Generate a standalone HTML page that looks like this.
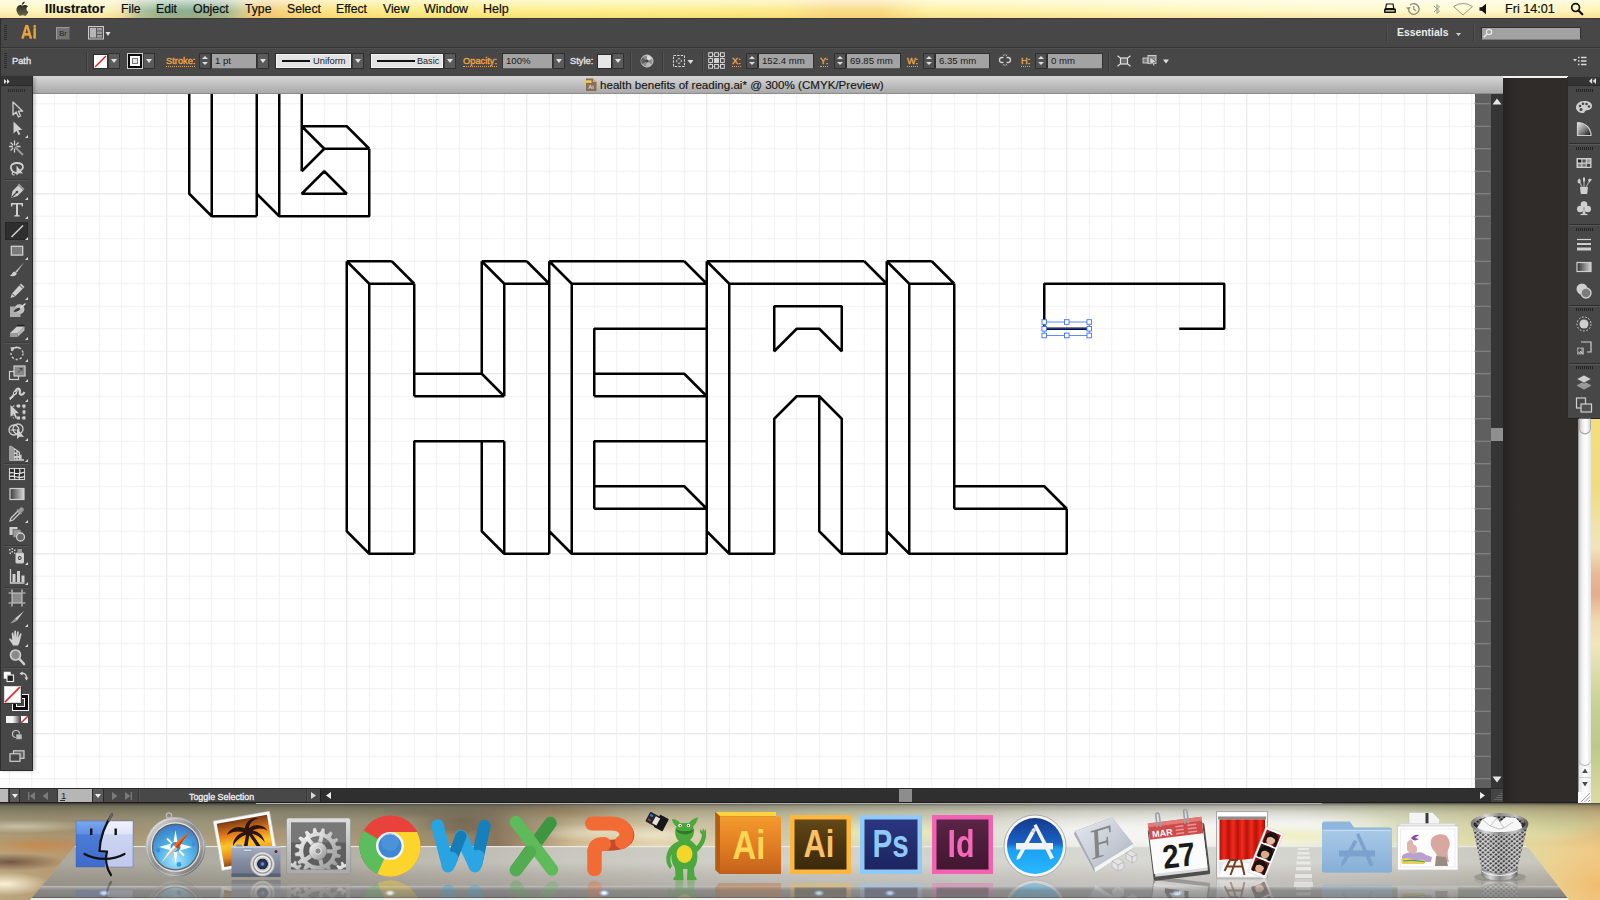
<!DOCTYPE html>
<html><head><meta charset="utf-8"><title>Illustrator</title>
<style>
*{box-sizing:border-box;margin:0;padding:0}
html,body{width:1600px;height:900px;overflow:hidden;background:#d8cfa6;font-family:"Liberation Sans",sans-serif}
.abs{position:absolute}
#root{position:absolute;left:0;top:0;width:1600px;height:900px;overflow:hidden}
svg{position:absolute;overflow:visible}
.t{position:absolute;white-space:nowrap;line-height:1}
</style></head><body><div id="root">
<!-- wallpaper bottom strip -->
<div class="abs" id="wall" style="left:0;top:803px;width:1600px;height:97px;background:linear-gradient(90deg,#c9b58d 0%,#b89468 6%,#c8b690 14%,#b5a88a 22%,#a79c82 32%,#b9b096 45%,#c8c3ad 55%,#cfcfc4 66%,#d5d6cc 78%,#d9dbb8 88%,#e6d9a0 94%,#f0cf8a 100%)"></div>
<!-- right wallpaper strip -->
<div class="abs" style="left:1577px;top:419px;width:23px;height:390px;background:linear-gradient(180deg,#f2de7a 0%,#f0dc80 18%,#efe3a8 27%,#f0e4b8 33%,#e8b894 40%,#e4ae8c 45%,#efdcae 52%,#f0e6bc 58%,#d8dca6 66%,#c6d094 74%,#bcc888 84%,#cfd49a 92%,#dedca4 100%)"></div>
<!-- menubar -->
<div class="abs" id="menubar" style="left:0;top:0;width:1600px;height:18px;background:linear-gradient(180deg,rgba(255,255,255,.6) 0%,rgba(255,255,255,.2) 40%,rgba(255,255,255,0) 60%,rgba(236,160,60,.22) 100%),linear-gradient(90deg,#fdf6c0 0%,#fdf4b6 6.5%,#f2e8b0 7.6%,#b4c7a2 8.6%,#8fb498 10%,#88ae94 12%,#9ab898 14%,#c8cc98 15%,#efce84 15.8%,#f4cf7c 17%,#f9e184 19%,#fcec88 24%,#fdf08c 40%,#fcea8a 49%,#f9dc88 52%,#f9dc88 55%,#fdf2a2 58%,#fef6b6 70%,#fef9c8 82%,#fefad0 92%,#fdf3b0 100%)"></div>
<!-- app bar + control bar -->
<div class="abs" style="left:0;top:18px;width:1600px;height:59px;background:#474747"></div>
<div class="abs" style="left:0;top:18px;width:1600px;height:1px;background:#3a3a3a"></div>
<div class="abs" style="left:0;top:47px;width:1600px;height:1px;background:#353535"></div>
<div class="abs" style="left:0;top:48px;width:1600px;height:1px;background:#505050"></div>
<!-- dark dock area right of doc -->
<div class="abs" style="left:1503px;top:77px;width:75px;height:726px;background:linear-gradient(90deg,#262423 0%,#2f2c2a 20%,#2f2c2a 100%)"></div>
<div class="abs" style="left:1503px;top:76px;width:65px;height:2px;background:#f2f2f2"></div>
<!-- doc tab bar -->
<div class="abs" style="left:33px;top:76px;width:1470px;height:18px;background:linear-gradient(180deg,#d6d6d6 0%,#c6c6c6 35%,#b0b0b0 80%,#a6a6a6 100%)"></div>
<div class="abs" style="left:33px;top:93px;width:1470px;height:1px;background:#8c8c8c"></div>
<!-- canvas white -->
<div class="abs" id="canvas" style="left:0;top:94px;width:1475px;height:694px;background:#fff"></div>
<!-- gray strip right of canvas -->
<div class="abs" style="left:1474.5px;top:94px;width:16px;height:694px;background:#5f5f5f"></div>
<!-- v scrollbar -->
<div class="abs" style="left:1490.5px;top:94px;width:12.5px;height:694px;background:#353535"></div>
<div class="abs" style="left:1490.5px;top:428px;width:12.5px;height:13px;background:#8f8f8f"></div>
<!-- status bar -->
<div class="abs" style="left:0;top:788px;width:1503px;height:15px;background:#2f2f2f"></div>
<div class="abs" style="left:0;top:788px;width:321px;height:15px;background:#484848"></div>
<div class="abs" style="left:0;top:788px;width:1503px;height:1px;background:#2a2a2a"></div>
<!-- canvas artwork -->
<svg width="1600" height="900" style="left:0;top:0" viewBox="0 0 1600 900">
<defs><clipPath id="cv"><rect x="0" y="94" width="1475" height="694"/></clipPath></defs>
<path d="M9.25 94V788M31.75 94V788M54.25 94V788M76.75 94V788M99.25 94V788M121.75 94V788M144.25 94V788M166.75 94V788M189.25 94V788M211.75 94V788M234.25 94V788M256.75 94V788M279.25 94V788M301.75 94V788M324.25 94V788M346.75 94V788M369.25 94V788M391.75 94V788M414.25 94V788M436.75 94V788M459.25 94V788M481.75 94V788M504.25 94V788M526.75 94V788M549.25 94V788M571.75 94V788M594.25 94V788M616.75 94V788M639.25 94V788M661.75 94V788M684.25 94V788M706.75 94V788M729.25 94V788M751.75 94V788M774.25 94V788M796.75 94V788M819.25 94V788M841.75 94V788M864.25 94V788M886.75 94V788M909.25 94V788M931.75 94V788M954.25 94V788M976.75 94V788M999.25 94V788M1021.75 94V788M1044.25 94V788M1066.75 94V788M1089.25 94V788M1111.75 94V788M1134.25 94V788M1156.75 94V788M1179.25 94V788M1201.75 94V788M1224.25 94V788M1246.75 94V788M1269.25 94V788M1291.75 94V788M1314.25 94V788M1336.75 94V788M1359.25 94V788M1381.75 94V788M1404.25 94V788M1426.75 94V788M1449.25 94V788M1471.75 94V788M0 103.75H1475M0 126.25H1475M0 148.75H1475M0 171.25H1475M0 193.75H1475M0 216.25H1475M0 238.75H1475M0 261.25H1475M0 283.75H1475M0 306.25H1475M0 328.75H1475M0 351.25H1475M0 373.75H1475M0 396.25H1475M0 418.75H1475M0 441.25H1475M0 463.75H1475M0 486.25H1475M0 508.75H1475M0 531.25H1475M0 553.75H1475M0 576.25H1475M0 598.75H1475M0 621.25H1475M0 643.75H1475M0 666.25H1475M0 688.75H1475M0 711.25H1475M0 733.75H1475M0 756.25H1475M0 778.75H1475" stroke="#f1f1f1" stroke-width="1" fill="none"/>
<path d="M1474.5 103.75H1490.5M1474.5 126.25H1490.5M1474.5 148.75H1490.5M1474.5 171.25H1490.5M1474.5 193.75H1490.5M1474.5 216.25H1490.5M1474.5 238.75H1490.5M1474.5 261.25H1490.5M1474.5 283.75H1490.5M1474.5 306.25H1490.5M1474.5 328.75H1490.5M1474.5 351.25H1490.5M1474.5 373.75H1490.5M1474.5 396.25H1490.5M1474.5 418.75H1490.5M1474.5 441.25H1490.5M1474.5 463.75H1490.5M1474.5 486.25H1490.5M1474.5 508.75H1490.5M1474.5 531.25H1490.5M1474.5 553.75H1490.5M1474.5 576.25H1490.5M1474.5 598.75H1490.5M1474.5 621.25H1490.5M1474.5 643.75H1490.5M1474.5 666.25H1490.5M1474.5 688.75H1490.5M1474.5 711.25H1490.5M1474.5 733.75H1490.5M1474.5 756.25H1490.5M1474.5 778.75H1490.5" stroke="#8b8b8b" stroke-width="1" fill="none"/>
<path d="M166.75 94V788M346.75 94V788M526.75 94V788M706.75 94V788M886.75 94V788M1066.75 94V788M1246.75 94V788M1426.75 94V788M0 193.75H1474.5M0 373.75H1474.5M0 553.75H1474.5M0 733.75H1474.5" stroke="#e9e9e9" stroke-width="1" fill="none"/>
<g clip-path="url(#cv)">
<path d="M346.75 261.25L391.75 261.25M346.75 261.25L369.25 283.75M391.75 261.25L414.25 283.75M369.25 283.75L414.25 283.75M346.75 261.25L346.75 531.25L369.25 553.75M369.25 283.75L369.25 553.75L414.25 553.75M414.25 283.75L414.25 396.25M414.25 373.75L481.75 373.75M414.25 396.25L504.25 396.25M481.75 373.75L504.25 396.25M481.75 261.25L481.75 373.75M504.25 283.75L504.25 396.25M481.75 261.25L526.75 261.25M481.75 261.25L504.25 283.75M526.75 261.25L549.25 283.75M504.25 283.75L549.25 283.75M414.25 553.75L414.25 441.25L504.25 441.25M481.75 441.25L481.75 531.25L504.25 553.75M504.25 441.25L504.25 553.75L549.25 553.75M549.25 261.25L549.25 553.75M549.25 261.25L684.25 261.25M549.25 261.25L571.75 283.75M684.25 261.25L706.75 283.75M571.75 283.75L706.75 283.75M549.25 531.25L571.75 553.75M571.75 283.75L571.75 553.75L706.75 553.75M706.75 261.25L706.75 553.75M706.75 328.75L594.25 328.75L594.25 396.25M594.25 373.75L684.25 373.75L706.75 396.25M594.25 396.25L706.75 396.25M706.75 441.25L594.25 441.25L594.25 508.75M594.25 486.25L684.25 486.25L706.75 508.75M594.25 508.75L706.75 508.75M706.75 261.25L864.25 261.25M706.75 261.25L729.25 283.75M864.25 261.25L886.75 283.75M729.25 283.75L886.75 283.75M706.75 531.25L729.25 553.75M729.25 283.75L729.25 553.75L774.25 553.75L774.25 418.75L796.75 396.25L819.25 396.25L841.75 418.75L841.75 553.75L886.75 553.75M819.25 396.25L819.25 531.25L841.75 553.75M886.75 261.25L886.75 553.75M774.25 306.25L841.75 306.25L841.75 351.25L819.25 328.75L796.75 328.75L774.25 351.25ZM886.75 261.25L931.75 261.25M886.75 261.25L909.25 283.75M931.75 261.25L954.25 283.75M909.25 283.75L954.25 283.75M886.75 531.25L909.25 553.75M909.25 283.75L909.25 553.75L1066.75 553.75L1066.75 508.75M954.25 283.75L954.25 508.75M954.25 486.25L1044.25 486.25L1066.75 508.75M954.25 508.75L1066.75 508.75M1044.25 328.75L1044.25 283.75L1224.25 283.75L1224.25 328.75L1179.25 328.75M189.25 81.25L189.25 193.75L211.75 216.25M211.75 81.25L211.75 216.25L256.75 216.25M256.75 81.25L256.75 216.25M256.75 193.75L279.25 216.25M279.25 81.25L279.25 216.25L369.25 216.25L369.25 148.75M301.75 81.25L301.75 171.25M301.75 126.25L346.75 126.25L369.25 148.75M324.25 148.75L369.25 148.75M301.75 126.25L324.25 148.75L301.75 171.25M301.75 193.75L324.25 171.25L346.75 193.75Z" stroke="#000" stroke-width="2.5" fill="none" stroke-linejoin="bevel" stroke-linecap="butt"/>
<path d="M1044.25 328.75H1089.25" stroke="#000" stroke-width="2.5"/>
<path d="M1044.25 328.75H1089.25" stroke="#2b50d8" stroke-width="0.9"/>
<rect x="1044.25" y="322" width="45" height="13.5" fill="none" stroke="#4d7dff" stroke-width="0.9"/>
<g fill="#fff" stroke="#3f6ffa" stroke-width="0.9"><rect x="1041.95" y="319.7" width="4.6" height="4.6"/><rect x="1041.95" y="326.45" width="4.6" height="4.6"/><rect x="1041.95" y="333.2" width="4.6" height="4.6"/><rect x="1064.45" y="319.7" width="4.6" height="4.6"/><rect x="1064.45" y="333.2" width="4.6" height="4.6"/><rect x="1086.95" y="319.7" width="4.6" height="4.6"/><rect x="1086.95" y="326.45" width="4.6" height="4.6"/><rect x="1086.95" y="333.2" width="4.6" height="4.6"/></g>
</g></svg>
<!-- menubar content -->
<style>
.mi{position:absolute;top:0;height:18px;line-height:19px;font-size:12.2px;color:#0c0c0c;-webkit-text-stroke:.2px #111;white-space:nowrap}
</style>
<svg width="16" height="16" style="left:14px;top:1px" viewBox="0 0 16 16"><defs><linearGradient id="apg" x1="0" y1="0" x2="0" y2="1"><stop offset="0" stop-color="#1a1a1a"/><stop offset="1" stop-color="#6a6550"/></linearGradient></defs><path d="M8.3 4.6C9.3 4.6 10 3.9 11.3 3.9c1.1 0 2.1.5 2.7 1.5-2.3 1.3-1.9 4.5.5 5.4-.4 1-1 2-1.6 2.7-.6.7-1.2 1.3-2 1.3-.9 0-1.2-.5-2.3-.5-1.1 0-1.400.5-2.300.5-.8 0-1.400-.7-2-1.400C2.800 11.600 1.700 8.300 3.200 6c.7-1.200 1.900-2 3-2 1 0 1.600.6 2.100.6zM10.600 0.500c.1 1.600-1.200 3.200-2.800 3.300C7.600 2.300 9.100.7 10.600.5z" fill="url(#apg)"/></svg>
<div class="mi" style="left:45px;font-weight:bold;font-size:12.6px;letter-spacing:.15px">Illustrator</div>
<div class="mi" style="left:121px">File</div>
<div class="mi" style="left:156px">Edit</div>
<div class="mi" style="left:193px;font-size:12.4px">Object</div>
<div class="mi" style="left:245px">Type</div>
<div class="mi" style="left:287px">Select</div>
<div class="mi" style="left:336px">Effect</div>
<div class="mi" style="left:383px">View</div>
<div class="mi" style="left:424px;font-size:12.4px">Window</div>
<div class="mi" style="left:483px;font-size:12.5px">Help</div>
<div class="mi" style="left:1505px;font-size:12.6px">Fri 14:01</div>
<!-- printer -->
<svg width="14" height="12" style="left:1383px;top:3px" viewBox="0 0 14 12"><path d="M3.500 1h6.500l.8 4.500H2.700z" fill="none" stroke="#111" stroke-width="1.200"/><rect x="1" y="5.500" width="12" height="4.500" rx="1" fill="#111"/><rect x="2.500" y="7.200" width="9" height="1.300" fill="#f5e9a0"/></svg>
<!-- time machine -->
<svg width="16" height="14" style="left:1405px;top:2px" viewBox="0 0 16 14"><path d="M3.500 7a5.300 5.300 0 1 0 1.600-3.800" fill="none" stroke="#8d8a7c" stroke-width="1.300"/><path d="M1 5.500l2.600 2.800L5.800 5z" fill="#8d8a7c"/><path d="M8.800 4v3.300l2.200 1.500" fill="none" stroke="#8d8a7c" stroke-width="1.200"/></svg>
<!-- bluetooth -->
<svg width="8" height="14" style="left:1433px;top:2px" viewBox="0 0 8 14"><path d="M1 4l5.500 5L4 11.500v-9L6.500 5 1 10" fill="none" stroke="#9a9684" stroke-width="1"/></svg>
<!-- wifi -->
<svg width="22" height="14" style="left:1452px;top:2px" viewBox="0 0 22 14"><path d="M1.500 4.500Q11-1.500 20.500 4.500L11 13z" fill="none" stroke="#9a9684" stroke-width="1"/></svg>
<!-- volume -->
<svg width="9" height="12" style="left:1479px;top:3px" viewBox="0 0 9 12"><path d="M0.500 4.200h2.200L7 .8v10.400L2.700 7.800H.5z" fill="#111"/></svg>
<!-- spotlight -->
<svg width="14" height="14" style="left:1570px;top:2px" viewBox="0 0 14 14"><circle cx="5.600" cy="5.600" r="3.900" fill="none" stroke="#111" stroke-width="1.700"/><path d="M8.500 8.500l3.800 3.800" stroke="#111" stroke-width="2.200" stroke-linecap="round"/></svg>
<!-- app bar -->
<style>
.grip{position:absolute;width:3px;background-image:repeating-linear-gradient(180deg,#2c2c2c 0,#2c2c2c 1px,transparent 1px,transparent 2px)}
.cl{position:absolute;top:48px;height:28px;line-height:27px;font-size:9.3px;color:#eea544;white-space:nowrap;-webkit-text-stroke:.35px #eea544}
.cl u{text-decoration:none;border-bottom:1px dotted #eea544;padding-bottom:0}
.cw{position:absolute;top:48px;height:28px;line-height:26px;font-size:9.3px;color:#e4e4e4;white-space:nowrap;-webkit-text-stroke:.35px #e4e4e4}
.fld{position:absolute;top:53px;height:16px;background:#a3a3a3;border:1px solid #2f2f2f;border-bottom-color:#5a5a5a;font-size:9.6px;line-height:14px;color:#1c1c1c;padding-left:3px;white-space:nowrap;overflow:hidden}
.dd{position:absolute;top:53px;height:16px;width:12px;background:#5b5b5b;border:1px solid #303030;border-left-color:#3a3a3a}
.dd:after{content:"";position:absolute;left:2px;top:5px;border:3.500px solid transparent;border-top:4px solid #e0e0e0;border-bottom:0}
.spin{position:absolute;top:53px;height:16px;width:12px;background:#505050;border:1px solid #303030}
.spin:before{content:"";position:absolute;left:2px;top:1.500px;border:3px solid transparent;border-bottom:3.500px solid #dcdcdc;border-top:0}
.spin:after{content:"";position:absolute;left:2px;top:8px;border:3px solid transparent;border-top:3.500px solid #dcdcdc;border-bottom:0}
.lbox{position:absolute;top:54px;height:14px;background:#e3e3e3;border:1px solid #f4f4f4;box-shadow:0 0 0 1px #2e2e2e;font-size:9.300px;line-height:13px;color:#1c1c1c;white-space:nowrap}
.sep{position:absolute;width:1px;background:#3a3a3a;box-shadow:1px 0 0 #525252}
</style>
<div class="grip" style="left:4px;top:25px;height:16px"></div>
<div class="t" style="left:21px;top:22px;font-size:18.500px;line-height:19px;font-weight:bold;color:#e9a23c;transform:scaleX(.86);transform-origin:0 0;text-shadow:0 1px 0 #c7822a">Ai</div>
<div class="abs" style="left:56px;top:27px;width:14px;height:13px;background:#747474;border:1px solid #9a9a9a;border-right-color:#5a5a5a;border-bottom-color:#5a5a5a;font-size:7.500px;line-height:11px;color:#1e1e1e;text-align:center">Br</div>
<svg width="24" height="14" style="left:88px;top:26px" viewBox="0 0 24 14"><rect x=".5" y=".5" width="15" height="12.500" fill="#5a5a5a" stroke="#c9c9c9"/><rect x="2" y="2" width="6" height="9.500" fill="#b5b5b5"/><rect x="9" y="2" width="5" height="2.500" fill="#9c9c9c"/><rect x="9" y="5.500" width="5" height="2.500" fill="#9c9c9c"/><rect x="9" y="9" width="5" height="2.500" fill="#9c9c9c"/><path d="M17.500 6h5l-2.500 4z" fill="#e2e2e2"/></svg>
<!-- essentials -->
<div class="sep" style="left:1386px;top:25px;height:17px"></div>
<div class="t" style="left:1397px;top:27px;font-size:10.400px;line-height:12px;font-weight:bold;color:#ececec">Essentials</div>
<svg width="5" height="3" style="left:1456px;top:32.500px" viewBox="0 0 5 3"><path d="M0 0h5L2.500 3z" fill="#d5d5d5"/></svg>
<div class="sep" style="left:1473px;top:25px;height:17px"></div>
<div class="abs" style="left:1481px;top:27px;width:100px;height:13px;background:#a2a2a2;border:1px solid #303030;border-bottom-color:#7a7a7a"></div>
<svg width="10" height="10" style="left:1483px;top:28px" viewBox="0 0 10 10"><circle cx="6" cy="4" r="2.600" fill="none" stroke="#e9e9e9" stroke-width="1.300"/><path d="M4 6L.8 9.200" stroke="#e9e9e9" stroke-width="1.500"/></svg>
<!-- control bar -->
<div class="grip" style="left:4px;top:53px;height:16px"></div>
<div class="cw" style="left:12px">Path</div>
<div class="sep" style="left:86px;top:52px;height:20px"></div>
<!-- fill swatch -->
<div class="abs" style="left:93px;top:54px;width:15px;height:15px;background:#fff;border:1px solid #2c2c2c"></div>
<svg width="13" height="13" style="left:94px;top:55px" viewBox="0 0 13 13"><path d="M1 12L12 1" stroke="#e8201c" stroke-width="1.500"/></svg>
<div class="dd" style="left:108px"></div>
<!-- stroke swatch -->
<div class="abs" style="left:127px;top:53px;width:16px;height:16px;background:#fff;border:1px solid #d0d0d0"></div>
<div class="abs" style="left:128px;top:54px;width:14px;height:14px;background:#fff;border:2.500px solid #0a0a0a"></div>
<div class="abs" style="left:132px;top:58px;width:6px;height:6px;background:#e8e8e8;border:1px solid #777"></div>
<div class="dd" style="left:143px"></div>
<div class="cl" style="left:166px"><u>Stroke:</u></div>
<div class="spin" style="left:199px"></div>
<div class="fld" style="left:211px;width:46px">1 pt</div>
<div class="dd" style="left:257px"></div>
<div class="lbox" style="left:276px;width:75px"><span style="position:absolute;left:5px;top:5px;width:28px;height:2px;background:#111"></span><span style="position:absolute;left:36px;top:0">Uniform</span></div>
<div class="dd" style="left:352px"></div>
<div class="lbox" style="left:371px;width:72px"><span style="position:absolute;left:5px;top:5px;width:38px;height:2px;background:#111"></span><span style="position:absolute;left:45px;top:0;font-size:9.1px">Basic</span></div>
<div class="dd" style="left:444px"></div>
<div class="cl" style="left:463px"><u>Opacity:</u></div>
<div class="fld" style="left:502px;width:51px">100%</div>
<div class="dd" style="left:553px"></div>
<div class="cw" style="left:570px">Style:</div>
<div class="abs" style="left:597px;top:54px;width:15px;height:15px;background:#e6e6e6;border:1px solid #2c2c2c"></div>
<div class="dd" style="left:612px"></div>
<div class="sep" style="left:630px;top:52px;height:20px"></div>
<svg width="14" height="14" style="left:640px;top:54px" viewBox="0 0 14 14"><circle cx="7" cy="7" r="6" fill="#8c8c8c" stroke="#cfcfcf" stroke-width="1"/><path d="M7 7L7 1.500A5.500 5.500 0 0 1 12 5z" fill="#dedede"/><path d="M7 7L2 10A5.500 5.500 0 0 1 2.500 3.500z" fill="#5e5e5e"/><path d="M7 7l4.500 3.500A5.500 5.500 0 0 1 6 12.400z" fill="#b9b9b9"/><circle cx="7" cy="7" r="1.600" fill="#444"/></svg>
<div class="sep" style="left:662px;top:52px;height:20px"></div>
<svg width="24" height="14" style="left:672px;top:54px" viewBox="0 0 24 14"><rect x="1.500" y="1.500" width="11" height="11" fill="none" stroke="#dcdcdc" stroke-width="1" stroke-dasharray="2.400 1.270"/><path d="M7 3.500l1.600 1.800H5.400zM7 10.500l1.600-1.800H5.400zM3.500 7l1.800-1.600v3.200zM10.500 7L8.700 5.400v3.200z" fill="#bdbdbd"/><path d="M15.500 6h6l-3 4z" fill="#dcdcdc"/></svg>
<div class="sep" style="left:702px;top:52px;height:20px"></div>
<svg width="17" height="17" style="left:707.500px;top:52px" viewBox="0 0 16.200 16.200"><path d="M2.500 2.500h11.200v11.200H2.500z" fill="none" stroke="#b5b5b5" stroke-width=".7"/><g stroke="#dedede" stroke-width=".9"><rect x="0.7" y="0.7" width="3.6" height="3.6" fill="#454545"/><rect x="6.3" y="0.7" width="3.6" height="3.6" fill="#454545"/><rect x="11.9" y="0.7" width="3.6" height="3.6" fill="#454545"/><rect x="0.7" y="6.3" width="3.6" height="3.6" fill="#454545"/><rect x="6.3" y="6.3" width="3.6" height="3.6" fill="#cfcfcf"/><rect x="11.9" y="6.3" width="3.6" height="3.6" fill="#454545"/><rect x="0.7" y="11.9" width="3.6" height="3.6" fill="#454545"/><rect x="6.3" y="11.9" width="3.6" height="3.6" fill="#454545"/><rect x="11.9" y="11.9" width="3.6" height="3.6" fill="#454545"/></g></svg>
<div class="cl" style="left:732px"><u>X:</u></div>
<div class="spin" style="left:746px"></div>
<div class="fld" style="left:758px;width:56px">152.4 mm</div>
<div class="cl" style="left:820px"><u>Y:</u></div>
<div class="spin" style="left:834px"></div>
<div class="fld" style="left:846px;width:55px">69.85 mm</div>
<div class="cl" style="left:907px"><u>W:</u></div>
<div class="spin" style="left:923px"></div>
<div class="fld" style="left:935px;width:55px">6.35 mm</div>
<svg width="14" height="14" style="left:998px;top:53px" viewBox="0 0 14 14"><path d="M5.500 4.500H4a2.500 2.500 0 0 0 0 5h1.500M8.500 4.500H10a2.500 2.500 0 0 1 0 5H8.500" fill="none" stroke="#d0d0d0" stroke-width="1.300"/><path d="M5 1.500l.8 1.500M9 1.500L8.200 3M5 12.500l.8-1.500M9 12.500L8.200 11M7 1v1.600M7 13v-1.600" stroke="#bdbdbd" stroke-width=".8"/></svg>
<div class="cl" style="left:1021px"><u>H:</u></div>
<div class="spin" style="left:1035px"></div>
<div class="fld" style="left:1047px;width:56px">0 mm</div>
<div class="sep" style="left:1108px;top:52px;height:20px"></div>
<svg width="14" height="12" style="left:1117px;top:55px" viewBox="0 0 14 12"><rect x="3.500" y="3" width="7" height="6" fill="#6a6a6a" stroke="#e2e2e2" stroke-width="1.200"/><path d="M.5.800l2.500 2M13.500.8l-2.500 2M.5 11.200l2.500-2M13.500 11.200l-2.500-2" stroke="#e2e2e2" stroke-width="1.100"/></svg>
<svg width="28" height="14" style="left:1142px;top:54px" viewBox="0 0 28 14"><rect x="1" y="4" width="5" height="5" fill="#7a7a7a" stroke="#d4d4d4" stroke-width=".9"/><rect x="6" y="1.500" width="8" height="8" fill="#8a8a8a" stroke="#d4d4d4" stroke-width=".9"/><path d="M8 3l6.500 5.200-3 .2 1.400 3-1.300.6-1.400-3L8 11z" fill="#d8d8d8" stroke="#444" stroke-width=".5"/><path d="M21 5.500h6l-3 4z" fill="#e0e0e0"/></svg>
<!-- panel menu -->
<svg width="14" height="10" style="left:1573px;top:56px" viewBox="0 0 14 10"><path d="M0 3h4L2 5.500z" fill="#d8d8d8"/><path d="M5 1.500h1.500M8 1.500h5.500M5 5h1.500M8 5h5.500M5 8.500h1.500M8 8.500h5.500" stroke="#d8d8d8" stroke-width="1.300"/></svg>
<!-- doc tab title -->
<svg width="15" height="15" style="left:583px;top:77px" viewBox="0 0 15 15"><path d="M3 1.500h7l3.500 3.500v9H3z" fill="#8a6e52"/><path d="M10 1.500V5h3.500z" fill="#c9b08a"/><rect x=".5" y="3.300" width="8" height="2.600" fill="#e9c860"/><text x="5.300" y="12.300" font-family="Liberation Sans" font-size="5.500" font-weight="bold" fill="#e8dcc0">Ai</text></svg>
<div class="t" style="left:600px;top:77px;font-size:11.600px;line-height:16px;color:#151515;-webkit-text-stroke:.15px #151515">health benefits of reading.ai* @ 300% (CMYK/Preview)</div>
<!-- left toolbar -->
<div class="abs" style="left:0;top:76px;width:33px;height:694px;background:#474747;border-right:1px solid #2a2a2a;box-shadow:0 1px 0 #2c2c2c,2px 1px 3px rgba(0,0,0,.22)"></div>
<div class="abs" style="left:0;top:76px;width:32px;height:10px;background:#343434;border-bottom:1px solid #2a2a2a"></div>
<svg width="6" height="5" style="left:3.500px;top:79px" viewBox="0 0 6 5"><path d="M0 0l2.700 2.500L0 5zM3 0l2.700 2.500L3 5z" fill="#e0e0e0"/></svg>
<div class="abs" style="left:8px;top:89px;width:17px;height:3px;background-image:repeating-linear-gradient(90deg,#2a2a2a 0,#2a2a2a 1px,transparent 1px,transparent 2px)"></div>
<div class="abs" style="left:5px;top:222px;width:23px;height:18px;background:#2e2e2e;border:1px solid #262626"></div>
<div class="abs" style="left:4px;top:179px;width:25px;height:1px;background:#3a3a3a;box-shadow:0 1px 0 #555"></div>
<div class="abs" style="left:4px;top:341.5px;width:25px;height:1px;background:#3a3a3a;box-shadow:0 1px 0 #555"></div>
<div class="abs" style="left:4px;top:462.5px;width:25px;height:1px;background:#3a3a3a;box-shadow:0 1px 0 #555"></div>
<div class="abs" style="left:4px;top:544.5px;width:25px;height:1px;background:#3a3a3a;box-shadow:0 1px 0 #555"></div>
<div class="abs" style="left:4px;top:586.5px;width:25px;height:1px;background:#3a3a3a;box-shadow:0 1px 0 #555"></div>
<div class="abs" style="left:4px;top:666.5px;width:25px;height:1px;background:#3a3a3a;box-shadow:0 1px 0 #555"></div>
<svg width="20" height="20" style="left:7px;top:100px" viewBox="0 0 20 20"><path d="M6 2v13l3.200-3 2.200 5 2.200-1-2.200-4.800h4.300z" fill="#474747" stroke="#cfcfcf" stroke-width="1.300" stroke-linejoin="round"/></svg>
<svg width="20" height="20" style="left:7px;top:119px" viewBox="0 0 20 20"><path d="M6.500 2.500v12l3-2.800 2 4.300 1.800-.8-2-4.200h4z" fill="#cfcfcf"/></svg>
<svg width="3" height="3" style="left:25px;top:135px" viewBox="0 0 3 3"><path d="M3 0v3H0z" fill="#d8d8d8"/></svg>
<svg width="20" height="20" style="left:7px;top:139px" viewBox="0 0 20 20"><path d="M8 8l8 8" stroke="#9a9a9a" stroke-width="2"/><path d="M7.500 1.500v5M7.500 9.500v4M2 7.500h4M9.500 7.500h4M3.500 3.500l2.500 2.500M11.500 3.500L9 6M3.500 11.500L6 9" stroke="#cfcfcf" stroke-width="1.300"/></svg>
<svg width="20" height="20" style="left:7px;top:159px" viewBox="0 0 20 20"><path d="M10 14C3 13 1 4.500 9.500 4c8-.4 8 7 3 7.500" fill="none" stroke="#cfcfcf" stroke-width="1.800"/><path d="M9.500 6.500v10l2.500-2.300 4 .3z" fill="#cfcfcf"/><path d="M6 13c-1.500 1-1 3 1.500 3" fill="none" stroke="#cfcfcf" stroke-width="1.200"/></svg>
<svg width="20" height="20" style="left:7px;top:181px" viewBox="0 0 20 20"><path d="M4 17l1.500-7 6-6 5 5-6 6z" fill="#cfcfcf"/><path d="M4.500 16.500l5-5" stroke="#474747" stroke-width="1.200"/><circle cx="10" cy="11" r="1.300" fill="#474747"/><path d="M12 2.500l5.500 5.500-1.500 1.500-5.500-5.500z" fill="#9a9a9a"/></svg>
<svg width="3" height="3" style="left:25px;top:197px" viewBox="0 0 3 3"><path d="M3 0v3H0z" fill="#d8d8d8"/></svg>
<svg width="20" height="20" style="left:7px;top:200px" viewBox="0 0 20 20"><path d="M4 3h12v3.500h-1.200l-.6-2H11v10.500l1.800.5v1h-5.600v-1l1.800-.5V4.500H5.800l-.6 2H4z" fill="#cfcfcf"/></svg>
<svg width="3" height="3" style="left:25px;top:216px" viewBox="0 0 3 3"><path d="M3 0v3H0z" fill="#d8d8d8"/></svg>
<svg width="20" height="20" style="left:7px;top:221px" viewBox="0 0 20 20"><path d="M4.500 16L16 4.500" stroke="#cfcfcf" stroke-width="1.600"/></svg>
<svg width="3" height="3" style="left:25px;top:237px" viewBox="0 0 3 3"><path d="M3 0v3H0z" fill="#d8d8d8"/></svg>
<svg width="20" height="20" style="left:7px;top:241px" viewBox="0 0 20 20"><rect x="4.300" y="5.300" width="11.400" height="8.800" fill="#7a7a7a" stroke="#cfcfcf" stroke-width="1.300"/></svg>
<svg width="3" height="3" style="left:25px;top:257px" viewBox="0 0 3 3"><path d="M3 0v3H0z" fill="#d8d8d8"/></svg>
<svg width="20" height="20" style="left:7px;top:260px" viewBox="0 0 20 20"><path d="M17 2.500L8.500 11.500l1.200 1.200z" fill="#cfcfcf"/><path d="M8 11.500c-3 0-2.500 3.500-5.500 4 3.500 1.500 7 .5 7.200-2.300z" fill="#cfcfcf"/></svg>
<svg width="20" height="20" style="left:7px;top:281px" viewBox="0 0 20 20"><path d="M14 2.500l3.500 3.500-9.500 9.500-4.500 1.500 1.500-4.500z" fill="#cfcfcf"/><path d="M5 12.500l3 3" stroke="#474747" stroke-width="1"/><path d="M12.500 4l3.500 3.500" stroke="#474747" stroke-width="1"/></svg>
<svg width="3" height="3" style="left:25px;top:297px" viewBox="0 0 3 3"><path d="M3 0v3H0z" fill="#d8d8d8"/></svg>
<svg width="20" height="20" style="left:7px;top:300px" viewBox="0 0 20 20"><circle cx="12.400" cy="9.300" r="5" fill="#c9c9c9"/><path d="M3 6.500h8.500v5h2v5.500H3z" fill="#adadad"/><circle cx="12.400" cy="9.300" r="4" fill="#bdbdbd"/><path d="M6.500 11.800C8 8.500 11 7.300 14 7.800 13 10.500 10 12.300 6.500 11.800z" fill="#3a3a3a"/><path d="M13.500 8L18 4" stroke="#dedede" stroke-width="1.600" stroke-linecap="round"/></svg>
<svg width="20" height="20" style="left:7px;top:321px" viewBox="0 0 20 20"><path d="M3 12l7-6.500h7.500L10.500 12z" fill="#cfcfcf"/><path d="M3 12h7.500v4H3z" fill="#9a9a9a"/><path d="M10.500 12L17.500 5.500v4L10.500 16z" fill="#b5b5b5"/><path d="M10 4.500h7.500" stroke="#222" stroke-width="1.500"/></svg>
<svg width="3" height="3" style="left:25px;top:337px" viewBox="0 0 3 3"><path d="M3 0v3H0z" fill="#d8d8d8"/></svg>
<svg width="20" height="20" style="left:7px;top:343px" viewBox="0 0 20 20"><circle cx="10" cy="10.500" r="6" fill="none" stroke="#cfcfcf" stroke-width="1.400" stroke-dasharray="2.200 2"/><path d="M4.500 7.500A6 6 0 0 1 12 4.800" fill="none" stroke="#cfcfcf" stroke-width="1.600"/><path d="M3 4.500l4.500-.5-1.500 4z" fill="#cfcfcf"/></svg>
<svg width="3" height="3" style="left:25px;top:359px" viewBox="0 0 3 3"><path d="M3 0v3H0z" fill="#d8d8d8"/></svg>
<svg width="20" height="20" style="left:7px;top:363px" viewBox="0 0 20 20"><rect x="2.500" y="8.500" width="9" height="8" fill="none" stroke="#cfcfcf" stroke-width="1.200"/><rect x="7" y="3" width="11" height="10" fill="#888" stroke="#cfcfcf" stroke-width="1.200"/><path d="M11 9.500l4-4M12.500 5.500H15V8" stroke="#474747" stroke-width="1" fill="none"/></svg>
<svg width="3" height="3" style="left:25px;top:379px" viewBox="0 0 3 3"><path d="M3 0v3H0z" fill="#d8d8d8"/></svg>
<svg width="20" height="20" style="left:7px;top:383px" viewBox="0 0 20 20"><path d="M2.500 15.500c3-1 4.500-3.500 5.500-6.500 1-3 3-4.500 4.500-2.500s-1 4 1 5 3.500-1.500 4-2.500" fill="none" stroke="#cfcfcf" stroke-width="2.200"/><circle cx="8" cy="10" r="1.700" fill="#474747" stroke="#cfcfcf"/><path d="M3 17l10-12" stroke="#cfcfcf" stroke-width="1"/></svg>
<svg width="3" height="3" style="left:25px;top:399px" viewBox="0 0 3 3"><path d="M3 0v3H0z" fill="#d8d8d8"/></svg>
<svg width="20" height="20" style="left:7px;top:402px" viewBox="0 0 20 20"><path d="M3.500 3l0 12 3-3 2 4 1.500-.7-1.800-4h3.800z" fill="#cfcfcf"/><rect x="6" y="4" width="11" height="12" fill="none" stroke="#cfcfcf" stroke-width="1" stroke-dasharray="1.500 1.500"/><g fill="#cfcfcf"><rect x="15.500" y="2.500" width="3" height="3"/><rect x="15.500" y="14.500" width="3" height="3"/><rect x="10" y="14.500" width="3" height="3"/><rect x="15.500" y="8.500" width="3" height="3"/><rect x="10" y="2.500" width="3" height="3"/></g></svg>
<svg width="20" height="20" style="left:7px;top:422px" viewBox="0 0 20 20"><circle cx="7" cy="8" r="5" fill="none" stroke="#cfcfcf" stroke-width="1.300"/><circle cx="11" cy="7" r="5" fill="none" stroke="#cfcfcf" stroke-width="1.300"/><path d="M10 6.500v10.500l2.500-2.300 4.500.3z" fill="#cfcfcf"/><path d="M3.500 8h6" stroke="#cfcfcf" stroke-width="1.200"/></svg>
<svg width="3" height="3" style="left:25px;top:438px" viewBox="0 0 3 3"><path d="M3 0v3H0z" fill="#d8d8d8"/></svg>
<svg width="20" height="20" style="left:7px;top:443px" viewBox="0 0 20 20"><path d="M3 3v14h14M3 17L14 12.500V17M3 3l4 2.500V17M7 5.500l3 2V17M10 7.500l2.500 2V17M3 8l9.500 3.500M3 12.500l11 2" fill="none" stroke="#cfcfcf" stroke-width="1.300"/><path d="M3 3l4 2.500V17H3z" fill="#9b9b9b"/></svg>
<svg width="3" height="3" style="left:25px;top:459px" viewBox="0 0 3 3"><path d="M3 0v3H0z" fill="#d8d8d8"/></svg>
<svg width="20" height="20" style="left:7px;top:464px" viewBox="0 0 20 20"><rect x="2.500" y="4.500" width="15" height="11" fill="#2c2c2c" stroke="#cfcfcf" stroke-width="1.100"/><path d="M2.500 9c4-2 6 3 15-1M2.500 12.500c5-2 8 3 15 0M7 4.500c2 3-1 7 1 11M12.500 4.500c2 4-2 7 0 11" fill="none" stroke="#ececec" stroke-width="1.100"/></svg>
<svg width="20" height="20" style="left:7px;top:484px" viewBox="0 0 20 20"><defs><linearGradient id="tg1" x1="0" x2="1" y1="0" y2="0"><stop offset="0" stop-color="#3a3a3a"/><stop offset="1" stop-color="#d8d8d8"/></linearGradient></defs><rect x="3" y="4.500" width="14" height="11" fill="url(#tg1)" stroke="#cfcfcf" stroke-width="1.200"/></svg>
<svg width="20" height="20" style="left:7px;top:504px" viewBox="0 0 20 20"><path d="M3 17l1-3 7-7 2 2-7 7z" fill="none" stroke="#cfcfcf" stroke-width="1.300"/><path d="M10 5.500l4.500 4.500M11.500 7l2-2.500c1-1.500 3.500.5 2.200 2L13.500 8.500" fill="#9a9a9a" stroke="#9a9a9a" stroke-width="1.600"/></svg>
<svg width="3" height="3" style="left:25px;top:520px" viewBox="0 0 3 3"><path d="M3 0v3H0z" fill="#d8d8d8"/></svg>
<svg width="20" height="20" style="left:7px;top:524px" viewBox="0 0 20 20"><rect x="2.500" y="3" width="8" height="8" fill="#cfcfcf"/><rect x="6" y="5.500" width="8" height="8" fill="#9a9a9a" stroke="#474747" stroke-width=".6"/><circle cx="13.500" cy="13" r="4" fill="#6a6a6a" stroke="#cfcfcf" stroke-width="1.300"/></svg>
<svg width="20" height="20" style="left:7px;top:546px" viewBox="0 0 20 20"><rect x="8.500" y="6.500" width="8.500" height="11" rx="1.500" fill="#cfcfcf"/><rect x="10.500" y="3" width="4.500" height="3.500" fill="#9a9a9a"/><circle cx="12.700" cy="12" r="2.600" fill="#474747" stroke="#eee"/><circle cx="12.700" cy="12" r=".9" fill="#cfcfcf"/><g fill="#cfcfcf"><rect x="2" y="3" width="1.500" height="1.500"/><rect x="4.500" y="2" width="1.500" height="1.500"/><rect x="4.500" y="5" width="1.500" height="1.500"/><rect x="7" y="3.500" width="1.500" height="1.500"/><rect x="2.500" y="6.500" width="1.500" height="1.500"/><rect x="7" y="6.500" width="1.300" height="1.300"/></g></svg>
<svg width="3" height="3" style="left:25px;top:562px" viewBox="0 0 3 3"><path d="M3 0v3H0z" fill="#d8d8d8"/></svg>
<svg width="20" height="20" style="left:7px;top:566px" viewBox="0 0 20 20"><path d="M3.500 3v14h14" fill="none" stroke="#cfcfcf" stroke-width="1.300"/><rect x="5.500" y="8" width="3" height="8" fill="#cfcfcf"/><rect x="10" y="5" width="3" height="11" fill="#cfcfcf"/><rect x="14.500" y="9.500" width="3" height="6.500" fill="#cfcfcf"/></svg>
<svg width="3" height="3" style="left:25px;top:582px" viewBox="0 0 3 3"><path d="M3 0v3H0z" fill="#d8d8d8"/></svg>
<svg width="20" height="20" style="left:7px;top:588px" viewBox="0 0 20 20"><rect x="5" y="5" width="10" height="10" fill="#8c8c8c" stroke="#cfcfcf" stroke-width="1"/><path d="M5 1.500v3M15 1.500v3M5 15.500v3M15 15.500v3M1.500 5h3M1.500 15h3M15.500 5h3M15.500 15h3" stroke="#cfcfcf" stroke-width="1.200"/></svg>
<svg width="20" height="20" style="left:7px;top:608px" viewBox="0 0 20 20"><path d="M17 3L8 10.500l2 2z" fill="#cfcfcf"/><path d="M8 10.500L3 15.500l5-1.500 2-1.500z" fill="#9a9a9a"/></svg>
<svg width="3" height="3" style="left:25px;top:624px" viewBox="0 0 3 3"><path d="M3 0v3H0z" fill="#d8d8d8"/></svg>
<svg width="20" height="20" style="left:7px;top:627.5px" viewBox="0 0 20 20"><path d="M6 17.500c-.5-2-3.500-4.500-4-6.500.8-1 2.200-.3 3.200 1.200L4.700 5.500c0-1.300 1.600-1.400 1.800 0l.6 4 .2-6c.1-1.300 1.800-1.300 1.800 0l.1 6 .9-5.500c.2-1.300 1.900-1 1.700.3l-.6 5.700 1.700-4c.5-1.200 2-.6 1.600.6l-1.500 5.400c-.3 2-1 4-2 5.500z" fill="#cfcfcf"/></svg>
<svg width="3" height="3" style="left:25px;top:643.5px" viewBox="0 0 3 3"><path d="M3 0v3H0z" fill="#d8d8d8"/></svg>
<svg width="20" height="20" style="left:7px;top:646.7px" viewBox="0 0 20 20"><circle cx="8.500" cy="8" r="5" fill="#8a8a8a" stroke="#cfcfcf" stroke-width="1.700"/><path d="M12.500 12l4.500 5" stroke="#cfcfcf" stroke-width="2.600" stroke-linecap="round"/></svg>
<svg width="26" height="12" style="left:3px;top:671px" viewBox="0 0 26 12"><rect x="1" y="1" width="6.500" height="6.500" fill="#fff" stroke="#ddd" stroke-width=".6"/><rect x="4" y="4" width="6.500" height="6.500" fill="#222" stroke="#e6e6e6" stroke-width="1.200"/><path d="M18 2.500c3-1 5.500 1 5.500 4.500" fill="none" stroke="#d5d5d5" stroke-width="1.300"/><path d="M16.500 2.500l3-2v4zM23.500 9.500l-2-3h4z" fill="#d5d5d5"/></svg>
<div class="abs" style="left:12px;top:694px;width:17px;height:17px;background:#0c0c0c;border:1px solid #f2f2f2"></div>
<div class="abs" style="left:16px;top:698px;width:9px;height:9px;background:#474747;border:1.500px solid #f2f2f2"></div>
<div class="abs" style="left:4px;top:686px;width:17px;height:17px;background:#fff;border:1px solid #d8d8d8;box-shadow:1px 1px 0 #333"></div>
<svg width="17" height="17" style="left:4px;top:686px" viewBox="0 0 17 17"><path d="M1 16L16 1" stroke="#ea1c1c" stroke-width="1.700"/></svg>
<div class="abs" style="left:6px;top:716px;width:7px;height:7px;background:#f4f4f4"></div>
<div class="abs" style="left:13px;top:716px;width:7px;height:7px;background:linear-gradient(90deg,#eee,#555)"></div>
<div class="abs" style="left:21px;top:716px;width:7px;height:7px;background:#fff"></div>
<svg width="7" height="7" style="left:21px;top:716px" viewBox="0 0 7 7"><path d="M0 7L7 0" stroke="#ea1c1c" stroke-width="1.400"/></svg>
<svg width="12" height="12" style="left:11px;top:729px" viewBox="0 0 12 12"><circle cx="5" cy="5" r="3.500" fill="none" stroke="#c8c8c8" stroke-width="1.200"/><rect x="5" y="5" width="6" height="5.500" fill="#bdbdbd" stroke="#474747" stroke-width=".6"/></svg>
<svg width="16" height="12" style="left:9px;top:750px" viewBox="0 0 16 12"><rect x="4.500" y=".8" width="10.500" height="7.500" fill="#666" stroke="#d0d0d0" stroke-width="1.200"/><rect x="1" y="3.800" width="10" height="7.500" fill="#474747" stroke="#d0d0d0" stroke-width="1.200"/></svg>
<!-- right icon panel -->
<div class="abs" style="left:1567px;top:77px;width:33px;height:342px;background:#474747;border-left:1px solid #2b2b2b;border-bottom:1px solid #222"></div>
<div class="abs" style="left:1568px;top:77px;width:32px;height:9px;background:#333;border-bottom:1px solid #292929"></div>
<svg width="7" height="6" style="left:1589px;top:78px" viewBox="0 0 7 6"><path d="M3.200 0L0 3l3.200 3zM7 0L3.800 3 7 6z" fill="#e0e0e0"/></svg>
<div class="abs" style="left:1576px;top:89px;width:17px;height:3px;background-image:repeating-linear-gradient(90deg,#222 0,#222 1px,transparent 1px,transparent 2px)"></div>
<div class="abs" style="left:1576px;top:147px;width:17px;height:3px;background-image:repeating-linear-gradient(90deg,#222 0,#222 1px,transparent 1px,transparent 2px)"></div>
<div class="abs" style="left:1576px;top:227.5px;width:17px;height:3px;background-image:repeating-linear-gradient(90deg,#222 0,#222 1px,transparent 1px,transparent 2px)"></div>
<div class="abs" style="left:1576px;top:308px;width:17px;height:3px;background-image:repeating-linear-gradient(90deg,#222 0,#222 1px,transparent 1px,transparent 2px)"></div>
<div class="abs" style="left:1576px;top:366px;width:17px;height:3px;background-image:repeating-linear-gradient(90deg,#222 0,#222 1px,transparent 1px,transparent 2px)"></div>
<div class="abs" style="left:1569px;top:143px;width:31px;height:1px;background:#2e2e2e;box-shadow:0 1px 0 #595959"></div>
<div class="abs" style="left:1569px;top:224px;width:31px;height:1px;background:#2e2e2e;box-shadow:0 1px 0 #595959"></div>
<div class="abs" style="left:1569px;top:305px;width:31px;height:1px;background:#2e2e2e;box-shadow:0 1px 0 #595959"></div>
<div class="abs" style="left:1569px;top:363px;width:31px;height:1px;background:#2e2e2e;box-shadow:0 1px 0 #595959"></div>
<svg width="20" height="20" style="left:1574px;top:97px" viewBox="0 0 20 20"><path d="M10 4C5 4 2 7 2 10.500S5.500 16 9 16c2 0 1.500-2 3-2.500 3-.8 6-1 6-4.500S15 4 10 4z" fill="#cfcfcf"/><g fill="#474747"><circle cx="6" cy="9" r="1.300"/><circle cx="9" cy="6.800" r="1.300"/><circle cx="12.500" cy="7" r="1.300"/><circle cx="15" cy="9.500" r="1.300"/><circle cx="7" cy="12.500" r="1.500"/></g></svg>
<svg width="20" height="20" style="left:1574px;top:119px" viewBox="0 0 20 20"><defs><linearGradient id="rg1" x1="0" x2="1" y1="0" y2="1"><stop offset="0" stop-color="#e8e8e8"/><stop offset=".5" stop-color="#888"/><stop offset="1" stop-color="#111"/></linearGradient></defs><path d="M3.500 3.500C11 3.500 17 9 17 16.500H3.500z" fill="url(#rg1)" stroke="#cfcfcf" stroke-width="1.200"/></svg>
<svg width="20" height="20" style="left:1574px;top:153px" viewBox="0 0 20 20"><rect x="2.500" y="5" width="15" height="10" fill="#cfcfcf"/><g fill="#222"><rect x="4" y="6.500" width="3.300" height="3"/><rect x="8.400" y="6.500" width="3.300" height="3" fill="#555"/><rect x="12.800" y="6.500" width="3.300" height="3" fill="#999"/><rect x="4" y="10.800" width="3.300" height="3" fill="#888"/><rect x="8.400" y="10.800" width="3.300" height="3" fill="#777"/><rect x="12.800" y="10.800" width="3.300" height="3" fill="#444"/></g></svg>
<svg width="20" height="20" style="left:1574px;top:176px" viewBox="0 0 20 20"><path d="M6 11h8l-.8 7H6.800z" fill="#cfcfcf"/><path d="M8 11L5.500 5.500M10 11V3M12 11l3-5" stroke="#9a9a9a" stroke-width="1.400"/><path d="M4 7c-1-2 0-4 1.500-4.500C7 4 7 6 5.800 7.500zM9 1.500h2v4H9zM14 4c1-1.500 3-1.500 4-.5-1 .5-1.500 2.500-3 3z" fill="#cfcfcf"/></svg>
<svg width="20" height="20" style="left:1574px;top:198px" viewBox="0 0 20 20"><circle cx="10" cy="6.500" r="3.300" fill="#cfcfcf"/><circle cx="6.300" cy="11" r="3.300" fill="#cfcfcf"/><circle cx="13.700" cy="11" r="3.300" fill="#cfcfcf"/><path d="M10 9l1.500 7h-3z" fill="#cfcfcf"/><path d="M6.500 16.500h7" stroke="#cfcfcf" stroke-width="1.200"/></svg>
<svg width="20" height="20" style="left:1574px;top:234px" viewBox="0 0 20 20"><path d="M3 5.500h14" stroke="#cfcfcf" stroke-width="1.200"/><path d="M3 10h14" stroke="#cfcfcf" stroke-width="2"/><path d="M3 15h14" stroke="#cfcfcf" stroke-width="3"/></svg>
<svg width="20" height="20" style="left:1574px;top:257px" viewBox="0 0 20 20"><defs><linearGradient id="rg2" x1="0" x2="1" y1="0" y2="0"><stop offset="0" stop-color="#303030"/><stop offset="1" stop-color="#d4d4d4"/></linearGradient></defs><rect x="3" y="5.500" width="14" height="9" fill="url(#rg2)" stroke="#cfcfcf" stroke-width="1.200"/></svg>
<svg width="20" height="20" style="left:1574px;top:281px" viewBox="0 0 20 20"><circle cx="8" cy="8" r="5.500" fill="#cfcfcf"/><circle cx="12" cy="12" r="5" fill="#7c7c7c" stroke="#cfcfcf" stroke-width="1.400"/></svg>
<svg width="20" height="20" style="left:1574px;top:314px" viewBox="0 0 20 20"><circle cx="10" cy="10" r="7" fill="none" stroke="#cfcfcf" stroke-width="1" stroke-dasharray="1.800 1.600"/><circle cx="10" cy="10" r="4.500" fill="#cfcfcf"/></svg>
<svg width="20" height="20" style="left:1574px;top:338px" viewBox="0 0 20 20"><path d="M7 4h10v10h-4" fill="none" stroke="#cfcfcf" stroke-width="1.200"/><rect x="3" y="9.500" width="7" height="7" fill="#9a9a9a"/><circle cx="5.800" cy="12.300" r="1.800" fill="#474747"/><path d="M6 13l3 3" stroke="#cfcfcf" stroke-width="1"/></svg>
<svg width="20" height="20" style="left:1574px;top:372px" viewBox="0 0 20 20"><path d="M10 9.500l7.500 4-7.500 4-7.500-4z" fill="#9a9a9a"/><path d="M10 3l7.500 4L10 11 2.500 7z" fill="#cfcfcf" stroke="#474747" stroke-width=".8"/></svg>
<svg width="20" height="20" style="left:1574px;top:395px" viewBox="0 0 20 20"><rect x="2.500" y="3" width="9" height="10" fill="none" stroke="#cfcfcf" stroke-width="1.200"/><rect x="7" y="9" width="10.500" height="8" fill="#505050" stroke="#cfcfcf" stroke-width="1.200"/></svg>
<div class="abs" style="left:1578px;top:419px;width:13px;height:384px;background:linear-gradient(90deg,#cfcfcf 0,#f4f4f4 25%,#fff 55%,#ededed 100%);border-left:1px solid #9a9a9a"></div>
<div class="abs" style="left:1579px;top:419px;width:12px;height:346px;border-radius:0 0 6px 6px;background:linear-gradient(90deg,#d0d0d0 0,#f3f3f3 30%,#fff 60%,#e4e4e4 100%)"></div>
<div class="abs" style="left:1580px;top:419px;width:10px;height:14px;border-radius:0 0 5px 5px;background:linear-gradient(90deg,#cdcdcd 0,#f6f6f6 40%,#fff 60%,#d8d8d8 100%);box-shadow:0 .5px 0 1px #a9a9a9"></div>
<div class="abs" style="left:1579px;top:765px;width:12px;height:27px;background:linear-gradient(90deg,#e4e4e4,#fdfdfd 50%,#ececec)"></div>
<div class="abs" style="left:1579px;top:752px;width:12px;height:13px;border-radius:0 0 6px 6px;box-shadow:0 1px 0 0 #b5b5b5"></div>
<svg width="12" height="26" style="left:1579px;top:765px" viewBox="0 0 12 26"><path d="M0 12.500h12" stroke="#d0d0d0"/><path d="M6 3.500l2.800 4.500H3.200zM6 21.500l2.800-4.500H3.200z" fill="#4a4a4a"/></svg>
<svg width="13" height="11" style="left:1578px;top:792px" viewBox="0 0 13 11"><rect width="13" height="11" fill="#fafafa"/><path d="M3 10l9-9M6.500 10l5.500-5.500M10 10l2-2" stroke="#9a9a9a" stroke-width="1"/></svg>
<svg width="10" height="7" style="left:1492px;top:98px" viewBox="0 0 10 7"><path d="M5 .5l4.500 6h-9z" fill="#e6e6e6"/></svg>
<svg width="10" height="7" style="left:1492px;top:776px" viewBox="0 0 10 7"><path d="M5 6.500l4.500-6h-9z" fill="#e6e6e6"/></svg>
<div class="abs" style="left:1490px;top:788px;width:13px;height:15px;background:#444;border-left:1px solid #2a2a2a;border-top:1px solid #2a2a2a"></div>
<svg width="9" height="9" style="left:1493px;top:792px" viewBox="0 0 9 9"><path d="M8 1v7M6 3v5M4 5v3M2 7v1" stroke="#8a8a8a" stroke-width="1" stroke-dasharray="1 1"/></svg>
<!-- status bar content -->
<div class="abs" style="left:0;top:789px;width:8px;height:13px;background:#b9b9b9"></div>
<div class="abs" style="left:9px;top:789px;width:11px;height:13px;background:#5a5a5a;border-left:1px solid #2d2d2d;border-right:1px solid #2d2d2d"></div>
<svg width="6" height="4" style="left:11.500px;top:794px" viewBox="0 0 6 4"><path d="M0 0h6L3 4z" fill="#efefef"/></svg>
<svg width="110" height="9" style="left:27px;top:791.500px" viewBox="0 0 110 9"><g fill="#7a7a7a"><rect x="1" y="0" width="1.300" height="8"/><path d="M8 0v8L2.500 4z"/><path d="M21 0v8L15.500 4z"/><path d="M85 0v8l5.500-4z"/><path d="M98 0v8l5.500-4z"/><rect x="103.700" y="0" width="1.300" height="8"/></g></svg>
<div class="abs" style="left:57px;top:789px;width:35px;height:13px;background:#b6b6b6;border-left:1px solid #333;font-size:9.500px;line-height:13px;color:#222;padding-left:3px">1</div>
<div class="abs" style="left:60px;top:800px;width:5px;height:1px;background:#333"></div>
<div class="abs" style="left:92px;top:789px;width:12px;height:13px;background:#5a5a5a;border-left:1px solid #2d2d2d;border-right:1px solid #2d2d2d"></div>
<svg width="6" height="4" style="left:95px;top:794px" viewBox="0 0 6 4"><path d="M0 0h6L3 4z" fill="#efefef"/></svg>
<div class="sep" style="left:138px;top:789px;height:13px"></div>
<div class="t" style="left:189px;top:791px;font-size:8.900px;line-height:12px;color:#f0f0f0;-webkit-text-stroke:.3px #f0f0f0">Toggle Selection</div>
<div class="sep" style="left:306px;top:789px;height:13px"></div>
<svg width="5" height="7" style="left:311px;top:792px" viewBox="0 0 5 7"><path d="M0 0l5 3.500-5 3.500z" fill="#d8d8d8"/></svg>
<div class="abs" style="left:320px;top:789px;width:1px;height:14px;background:#222"></div>
<svg width="5" height="7" style="left:326px;top:792px" viewBox="0 0 5 7"><path d="M5 0L0 3.500l5 3.500z" fill="#ececec"/></svg>
<div class="abs" style="left:899px;top:789px;width:13px;height:13px;background:#8d8d8d"></div>
<svg width="5" height="7" style="left:1480px;top:792px" viewBox="0 0 5 7"><path d="M0 0l5 3.500-5 3.500z" fill="#ececec"/></svg>
<div class="abs" style="left:0;top:802px;width:1578px;height:1.500px;background:#1d1d1d"></div>
<!-- dock background + shelf -->
<svg width="1600" height="97" style="left:0;top:803px" viewBox="0 803 1600 97">
<defs>
<linearGradient id="wbg" x1="0" x2="1" y1="0" y2="0">
<stop offset="0" stop-color="#b9a57e"/><stop offset=".04" stop-color="#b59a72"/><stop offset=".12" stop-color="#b3a686"/><stop offset=".2" stop-color="#b5a588"/><stop offset=".27" stop-color="#a4906e"/><stop offset=".31" stop-color="#8c745a"/><stop offset=".36" stop-color="#d6c096"/><stop offset=".41" stop-color="#ead9b0"/><stop offset=".47" stop-color="#d5cdb0"/><stop offset=".52" stop-color="#d8d8b4"/><stop offset=".6" stop-color="#d9d9c8"/><stop offset=".7" stop-color="#e9e9e2"/><stop offset=".8" stop-color="#f0f0e6"/><stop offset=".88" stop-color="#e2e6c2"/><stop offset=".95" stop-color="#e4dba0"/><stop offset="1" stop-color="#f0c784"/>
</linearGradient>
<linearGradient id="wtop" x1="0" x2="0" y1="0" y2="1"><stop offset="0" stop-color="#1b1b1b" stop-opacity=".7"/><stop offset=".05" stop-color="#5a5a50" stop-opacity=".4"/><stop offset=".15" stop-color="#77776a" stop-opacity=".18"/><stop offset=".45" stop-color="#fff" stop-opacity="0"/></linearGradient>
<linearGradient id="shelf" x1="0" x2="0" y1="0" y2="1"><stop offset="0" stop-color="#dcdcd8"/><stop offset=".04" stop-color="#c4c4be"/><stop offset=".3" stop-color="#c6c6bf"/><stop offset=".55" stop-color="#b2afa8"/><stop offset=".73" stop-color="#a7a4a0"/><stop offset=".745" stop-color="#c0c0c0"/><stop offset=".775" stop-color="#a0a0a0"/><stop offset=".82" stop-color="#878787"/><stop offset=".94" stop-color="#7d7d7d"/><stop offset=".956" stop-color="#5e5e5e"/><stop offset=".972" stop-color="#f0f0f0"/><stop offset="1" stop-color="#fafafa"/></linearGradient>
<radialGradient id="b1" cx=".5" cy=".5" r=".5"><stop offset="0" stop-color="#5b4332" stop-opacity=".95"/><stop offset=".6" stop-color="#6e5440" stop-opacity=".6"/><stop offset="1" stop-color="#8a6e50" stop-opacity="0"/></radialGradient>
<radialGradient id="b2" cx=".5" cy=".5" r=".5"><stop offset="0" stop-color="#fff6da" stop-opacity=".95"/><stop offset="1" stop-color="#fff6da" stop-opacity="0"/></radialGradient>
<radialGradient id="b3" cx=".5" cy=".5" r=".5"><stop offset="0" stop-color="#c88a4e" stop-opacity=".95"/><stop offset="1" stop-color="#c88a4e" stop-opacity="0"/></radialGradient>
<radialGradient id="b4" cx=".5" cy=".5" r=".5"><stop offset="0" stop-color="#ffffff" stop-opacity=".95"/><stop offset="1" stop-color="#ffffff" stop-opacity="0"/></radialGradient>
<radialGradient id="b5" cx=".5" cy=".5" r=".5"><stop offset="0" stop-color="#f3f3c0" stop-opacity=".9"/><stop offset="1" stop-color="#f3f3c0" stop-opacity="0"/></radialGradient>
<radialGradient id="b6" cx=".5" cy=".5" r=".5"><stop offset="0" stop-color="#6d4e3c" stop-opacity=".9"/><stop offset="1" stop-color="#6d4e3c" stop-opacity="0"/></radialGradient>
<linearGradient id="olv" x1="0" x2="0" y1="0" y2="1"><stop offset="0" stop-color="#6f6d58" stop-opacity=".85"/><stop offset=".35" stop-color="#7d7a62" stop-opacity=".6"/><stop offset="1" stop-color="#8a866c" stop-opacity="0"/></linearGradient>
<radialGradient id="b7" cx=".5" cy=".5" r=".5"><stop offset="0" stop-color="#f2b868" stop-opacity=".8"/><stop offset=".5" stop-color="#f0c47c" stop-opacity=".5"/><stop offset="1" stop-color="#f0d090" stop-opacity="0"/></radialGradient>
<radialGradient id="b8" cx=".5" cy=".5" r=".5"><stop offset="0" stop-color="#d4d89a" stop-opacity=".8"/><stop offset="1" stop-color="#d4d89a" stop-opacity="0"/></radialGradient>
<linearGradient id="shm" x1="0" x2="1" y1="0" y2="0"><stop offset="0" stop-color="#55503c" stop-opacity=".22"/><stop offset=".2" stop-color="#55503c" stop-opacity=".16"/><stop offset=".36" stop-color="#fff" stop-opacity=".05"/><stop offset=".5" stop-color="#fff" stop-opacity=".2"/><stop offset=".75" stop-color="#fff" stop-opacity=".3"/><stop offset=".9" stop-color="#fff" stop-opacity=".15"/><stop offset="1" stop-color="#fff" stop-opacity="0"/></linearGradient>
<linearGradient id="olh" x1="0" x2="1600" y1="0" y2="0" gradientUnits="userSpaceOnUse"><stop offset="0" stop-color="#fff"/><stop offset=".25" stop-color="#fff"/><stop offset=".45" stop-color="#fff" stop-opacity=".45"/><stop offset=".6" stop-color="#fff" stop-opacity=".15"/><stop offset=".85" stop-color="#fff" stop-opacity=".12"/><stop offset="1" stop-color="#fff" stop-opacity=".45"/></linearGradient>
<mask id="olm" maskUnits="userSpaceOnUse" x="0" y="803" width="1600" height="45"><rect x="0" y="803" width="1600" height="45" fill="url(#olh)"/></mask>
<radialGradient id="glow" cx=".5" cy=".5" r=".5"><stop offset="0" stop-color="#ffffff"/><stop offset=".35" stop-color="#dcecff"/><stop offset="1" stop-color="#8fb8ff" stop-opacity="0"/></radialGradient>
</defs>
<rect x="0" y="803" width="1600" height="97" fill="url(#wbg)"/>
<!-- left wallpaper blobs -->
<ellipse cx="20" cy="826" rx="70" ry="7" fill="url(#b2)"/>
<ellipse cx="40" cy="845" rx="70" ry="10" fill="url(#b3)"/>
<ellipse cx="10" cy="862" rx="55" ry="9" fill="url(#b6)"/>
<ellipse cx="5" cy="884" rx="45" ry="12" fill="url(#b2)"/>
<ellipse cx="265" cy="836" rx="40" ry="10" fill="url(#b3)" opacity=".5"/>
<ellipse cx="300" cy="822" rx="50" ry="9" fill="url(#b6)" opacity=".5"/>
<ellipse cx="462" cy="820" rx="52" ry="17" fill="url(#b1)"/>
<ellipse cx="420" cy="812" rx="40" ry="8" fill="url(#b6)" opacity=".7"/>
<ellipse cx="560" cy="812" rx="60" ry="8" fill="url(#b3)" opacity=".8"/>
<ellipse cx="600" cy="832" rx="70" ry="10" fill="url(#b2)"/>
<ellipse cx="660" cy="834" rx="50" ry="9" fill="url(#b2)"/>
<ellipse cx="855" cy="832" rx="30" ry="16" fill="url(#b5)"/>
<ellipse cx="925" cy="832" rx="25" ry="16" fill="url(#b5)"/>
<ellipse cx="1100" cy="830" rx="150" ry="26" fill="url(#b4)"/><ellipse cx="1230" cy="828" rx="130" ry="24" fill="url(#b4)"/>
<ellipse cx="1290" cy="834" rx="90" ry="14" fill="url(#b5)"/>
<ellipse cx="1300" cy="822" rx="100" ry="14" fill="url(#b4)"/>
<ellipse cx="1540" cy="830" rx="60" ry="14" fill="url(#b5)" opacity=".7"/>
<ellipse cx="1600" cy="885" rx="75" ry="40" fill="url(#b7)"/><ellipse cx="1560" cy="822" rx="60" ry="16" fill="url(#b8)"/>
<rect x="0" y="803" width="1600" height="45" fill="url(#olv)" mask="url(#olm)"/>
<rect x="0" y="803" width="1600" height="60" fill="url(#wtop)"/>
<!-- shelf -->
<path d="M75 846H1527L1569 900H30z" fill="url(#shelf)" opacity=".93"/>
<path d="M75 846H1527L1558 886H42z" fill="url(#shm)"/>
<path d="M75 846.500H1527" stroke="#e9e9e6" stroke-width="1.200"/>
<!-- indicator glows -->
<g>
<ellipse cx="104" cy="893" rx="6" ry="3.500" fill="url(#glow)"/><ellipse cx="390" cy="893" rx="6" ry="3.500" fill="url(#glow)"/><ellipse cx="604" cy="893" rx="6" ry="3.500" fill="url(#glow)"/><ellipse cx="819" cy="893" rx="6" ry="3.500" fill="url(#glow)"/><ellipse cx="890" cy="893" rx="6" ry="3.500" fill="url(#glow)"/><ellipse cx="1177" cy="893" rx="6" ry="3.500" fill="url(#glow)"/>
</g>
</svg>
<!-- reflections -->
<svg width="1600" height="97" style="left:0;top:803px" viewBox="0 803 1600 97">
<defs><clipPath id="rfc"><path d="M44 879H1553L1568 898H31z"/></clipPath>
<linearGradient id="rfm" x1="0" x2="0" y1="879" y2="899" gradientUnits="userSpaceOnUse"><stop offset="0" stop-color="#fff" stop-opacity=".42"/><stop offset="1" stop-color="#fff" stop-opacity=".12"/></linearGradient>
<mask id="rfk" maskUnits="userSpaceOnUse" x="0" y="803" width="1600" height="97"><rect x="0" y="879" width="1600" height="21" fill="url(#rfm)"/></mask></defs>
<g clip-path="url(#rfc)" mask="url(#rfk)"><g transform="translate(0 1757) scale(1 -1)"><use href="#dk1"/><use href="#dk2"/></g></g>
</svg>
<!-- dock icons 1 -->
<svg width="1600" height="97" style="left:0;top:803px" viewBox="0 803 1600 97">
<defs>
<linearGradient id="fdl" x1="0" x2="0" y1="0" y2="1"><stop offset="0" stop-color="#7da6ee"/><stop offset=".28" stop-color="#5d8fe6"/><stop offset=".3" stop-color="#4a7bd6"/><stop offset="1" stop-color="#3f6ccc"/></linearGradient>
<linearGradient id="fdr" x1="0" x2="0" y1="0" y2="1"><stop offset="0" stop-color="#f0f3fd"/><stop offset=".28" stop-color="#dfe5fa"/><stop offset=".3" stop-color="#ccd4f2"/><stop offset="1" stop-color="#bfc9ee"/></linearGradient>
<linearGradient id="slv" x1="0" x2="1" y1="0" y2="1"><stop offset="0" stop-color="#f2f2f2"/><stop offset=".28" stop-color="#b0b0b0"/><stop offset=".5" stop-color="#8a8a8a"/><stop offset=".7" stop-color="#a8a8a8"/><stop offset="1" stop-color="#3c3c3c"/></linearGradient>
<radialGradient id="sfb" cx=".5" cy=".8" r=".8"><stop offset="0" stop-color="#aee6fb"/><stop offset=".5" stop-color="#4fb2e6"/><stop offset="1" stop-color="#3a78c6"/></radialGradient>
<linearGradient id="sun" x1="0" x2="0" y1="0" y2="1"><stop offset="0" stop-color="#7a3a18"/><stop offset=".3" stop-color="#e47a1a"/><stop offset=".55" stop-color="#ffc62a"/><stop offset=".8" stop-color="#e88a1c"/><stop offset="1" stop-color="#8a4a20"/></linearGradient>
<linearGradient id="cam" x1="0" x2="0" y1="0" y2="1"><stop offset="0" stop-color="#a9b2c4"/><stop offset=".5" stop-color="#838da2"/><stop offset="1" stop-color="#6c7589"/></linearGradient>
<radialGradient id="lens" cx=".5" cy=".5" r=".5"><stop offset="0" stop-color="#9ab4ff"/><stop offset=".18" stop-color="#2a3a78"/><stop offset=".4" stop-color="#22242c"/><stop offset=".45" stop-color="#b8b8b8"/><stop offset=".62" stop-color="#f4f4f4"/><stop offset=".72" stop-color="#8f8f8f"/><stop offset=".85" stop-color="#e9e9e9"/><stop offset="1" stop-color="#9a9a9a"/></radialGradient>
<linearGradient id="spf" x1="0" x2="0" y1="0" y2="1"><stop offset="0" stop-color="#dedede"/><stop offset="1" stop-color="#a9a9a9"/></linearGradient>
<linearGradient id="gear" x1="0" x2="1" y1="0" y2="1"><stop offset="0" stop-color="#ffffff"/><stop offset=".5" stop-color="#c4c4c4"/><stop offset="1" stop-color="#8d8d8d"/></linearGradient>
<linearGradient id="wbl" x1="0" x2="1" y1="0" y2="0"><stop offset="0" stop-color="#2fa9e6"/><stop offset="1" stop-color="#1784c2"/></linearGradient>
</defs>
<g id="dk1">
<!-- Finder -->
<g>
<rect x="76" y="821" width="57" height="46" fill="url(#fdr)"/>
<path d="M76 821H110C103 832 100 842 99.500 851L107 851.500C105.500 857 105 862 105.500 867H76z" fill="url(#fdl)"/>
<rect x="76" y="821" width="57" height="46" fill="none" stroke="#3a5ea8" stroke-width=".6" opacity=".6"/>
<path d="M112 814.500C104 826 100 840 99.500 851L107 851.500C105 858 106 868 111 875" fill="none" stroke="#111" stroke-width="2.200" stroke-linejoin="round" stroke-linecap="round"/>
<path d="M112 814.500L109 820" stroke="#666" stroke-width="2.200" stroke-linecap="round"/>
<path d="M84.500 854C96 860.500 113 860.500 124.500 854" fill="none" stroke="#111" stroke-width="2.200" stroke-linecap="round"/>
<rect x="90" y="828.500" width="2.400" height="6.500" fill="#111"/><rect x="114.500" y="828.500" width="2.400" height="6.500" fill="#111"/>
</g>
<!-- Safari -->
<g>
<circle cx="169" cy="815.500" r="2.600" fill="none" stroke="#b9b9b9" stroke-width="1.400"/>
<circle cx="175.500" cy="847" r="30" fill="url(#slv)"/>
<circle cx="175.500" cy="847" r="28.500" fill="none" stroke="#fff" stroke-opacity=".35" stroke-width="1"/><circle cx="175.500" cy="847" r="24.800" fill="#e6e6e6"/>
<circle cx="175.500" cy="847" r="23.600" fill="#5e5e5e"/>
<circle cx="175.500" cy="847" r="22.300" fill="url(#sfb)"/>
<path d="M175.500 830l2.200 13 14.300 4-14.300 4-2.200 13-2.200-13-14.300-4 14.300-4z" fill="#fff" opacity=".95"/>
<path d="M167 838.500l6 6M184 838.500l-6 6M167 855.500l6-6M184 855.500l-6-6" stroke="#fff" stroke-width="1.800"/>
<circle cx="175.500" cy="847" r="5" fill="#2f8fd4"/>
<path d="M190 831L177.500 849 173.500 845z" fill="#f26a1c"/><path d="M190 831L177.500 849l-2-2z" fill="#c7440c"/>
<path d="M161 863L173.500 845l4 4z" fill="#f2f2f2"/><path d="M161 863l14.500-16 2 2z" fill="#b9b9b9"/>
<circle cx="173.500" cy="829.500" r="2.200" fill="#4a7fd8"/><circle cx="193.500" cy="844" r="2.200" fill="#3f8fd8"/><circle cx="158" cy="850" r="2.200" fill="#3f8fd8"/><circle cx="179" cy="864.500" r="2.400" fill="#2f9fe4"/>
</g>
<!-- iPhoto -->
<g>
<g transform="rotate(-10 245 840)">
<rect x="217" y="816" width="57" height="50" fill="#fbfbfb" stroke="#cfcfcf" stroke-width=".6"/>
<rect x="220" y="819" width="51" height="44" fill="url(#sun)"/>
<path d="M246 828C240 824 232 826 228 832 234 829 240 830 245 832 238 833 233 838 232 844 236 839 241 836 247 835L236 863H241L250 836 262 863H266L253 835C258 837 262 841 264 846 264 839 260 834 254 832 259 830 265 831 269 835 266 828 258 825 251 829 252 825 256 821 262 821 256 818 249 822 247 828z" fill="#2a160c"/>
</g>
<rect x="231.500" y="846" width="49" height="31" rx="2" fill="url(#cam)"/>
<rect x="231.500" y="846" width="49" height="2" fill="#c5ccda"/>
<rect x="231.500" y="873.500" width="49" height="3.500" fill="#596174"/>
<rect x="236" y="844.500" width="6" height="2" fill="#8a93a6"/>
<rect x="243" y="849" width="9" height="2.600" rx="1.300" fill="#c7d9ea" stroke="#6c7589" stroke-width=".5"/>
<circle cx="276" cy="851.500" r="1.500" fill="#8a1010"/>
<circle cx="262.500" cy="864" r="12.500" fill="url(#lens)"/>
</g>
<!-- System Preferences -->
<g>
<rect x="286.500" y="818" width="64" height="56" rx="2" fill="url(#spf)" stroke="#8e8e8e" stroke-width=".6"/>
<rect x="291" y="822.500" width="55" height="47" fill="#5e5e5e"/>
<rect x="291" y="822.500" width="55" height="20" fill="#8a8a8a" opacity=".6"/>
<clipPath id="spc"><rect x="291" y="822.500" width="55" height="47"/></clipPath>
<g clip-path="url(#spc)">
<path d="M336.9 852.9L341.2 855.0L340.4 858.0L335.7 858.0L334.7 860.0L337.9 863.6L336.0 866.1L331.7 864.2L330.0 865.7L331.6 870.2L328.9 871.8L325.6 868.4L323.5 869.2L323.2 873.9L320.1 874.4L318.3 870.0L316.1 869.9L314.0 874.2L311.0 873.4L311.0 868.7L309.0 867.7L305.4 870.9L302.9 869.0L304.8 864.7L303.3 863.0L298.8 864.6L297.2 861.9L300.6 858.6L299.8 856.5L295.1 856.2L294.6 853.1L299.0 851.3L299.1 849.1L294.8 847.0L295.6 844.0L300.3 844.0L301.3 842.0L298.1 838.4L300.0 835.9L304.3 837.8L306.0 836.3L304.4 831.8L307.1 830.2L310.4 833.6L312.5 832.8L312.8 828.1L315.9 827.6L317.7 832.0L319.9 832.1L322.0 827.8L325.0 828.6L325.0 833.3L327.0 834.3L330.6 831.1L333.1 833.0L331.2 837.3L332.7 839.0L337.2 837.4L338.8 840.1L335.4 843.4L336.2 845.5L340.9 845.8L341.4 848.9L337.0 850.7ZM303.5 851.0a14.5 14.5 0 1 0 29.0 0a14.5 14.5 0 1 0 -29.0 0z" fill="url(#gear)" fill-rule="evenodd" stroke="#5a5a5a" stroke-width=".5"/>
<path d="M318 851L306 836.500M318 851L322.500 832.500M318 851L337 851.500M318 851L323 870M318 851L302 862" stroke="url(#gear)" stroke-width="4"/>
<circle cx="318" cy="851" r="9" fill="url(#gear)" stroke="#777" stroke-width=".5"/>
<circle cx="318" cy="851" r="3.200" fill="#8a8a8a" stroke="#f2f2f2" stroke-width=".9"/>
<path d="M300.8 875.0L303.4 876.8L302.6 878.9L299.4 878.4L298.5 879.6L299.9 882.5L298.1 883.9L295.6 881.9L294.2 882.5L294.0 885.7L291.7 886.0L290.6 883.0L289.0 882.8L287.2 885.4L285.1 884.6L285.6 881.4L284.4 880.5L281.5 881.9L280.1 880.1L282.1 877.6L281.5 876.2L278.3 876.0L278.0 873.7L281.0 872.6L281.2 871.0L278.6 869.2L279.4 867.1L282.6 867.6L283.5 866.4L282.1 863.5L283.9 862.1L286.4 864.1L287.8 863.5L288.0 860.3L290.3 860.0L291.4 863.0L293.0 863.2L294.8 860.6L296.9 861.4L296.4 864.6L297.6 865.5L300.5 864.1L301.9 865.9L299.9 868.4L300.5 869.8L303.7 870.0L304.0 872.3L301.0 873.4ZM285.0 873.0a6.0 6.0 0 1 0 12.0 0a6.0 6.0 0 1 0 -12.0 0z" fill="url(#gear)" fill-rule="evenodd" stroke="#555" stroke-width=".4"/>
<path d="M354.2 877.5L355.9 879.7L354.6 881.4L352.0 880.1L350.8 880.9L351.3 883.8L349.3 884.5L347.7 882.1L346.2 882.3L345.2 885.0L343.0 884.6L342.9 881.8L341.5 881.2L339.3 882.9L337.6 881.6L338.9 879.0L338.1 877.8L335.2 878.3L334.5 876.3L336.9 874.7L336.7 873.2L334.0 872.2L334.4 870.0L337.2 869.9L337.8 868.5L336.1 866.3L337.4 864.6L340.0 865.9L341.2 865.1L340.7 862.2L342.7 861.5L344.3 863.9L345.8 863.7L346.8 861.0L349.0 861.4L349.1 864.2L350.5 864.8L352.7 863.1L354.4 864.4L353.1 867.0L353.9 868.2L356.8 867.7L357.5 869.7L355.1 871.3L355.3 872.8L358.0 873.8L357.6 876.0L354.8 876.1ZM340.5 873.0a5.5 5.5 0 1 0 11.0 0a5.5 5.5 0 1 0 -11.0 0z" fill="url(#gear)" fill-rule="evenodd" stroke="#555" stroke-width=".4"/>
</g>
</g>
<!-- Chrome -->
<g>
<circle cx="390" cy="846" r="30.500" fill="#e8423a"/>
<path d="M390 846L363.600 830.700A30.500 30.500 0 0 0 378 874z" fill="#4db050"/>
<path d="M390 846L363.600 830.700A30.500 30.500 0 0 0 377.500 873.800L390 852z" fill="#5cbd5e"/>
<path d="M390 846H420.400A30.500 30.500 0 0 1 377.500 873.800z" fill="#fdd835"/>
<path d="M390 832H417A30.500 30.500 0 0 1 420.500 846 30.500 30.500 0 0 1 377.500 873.800L395 846z" fill="#fdd42c"/>
<path d="M364 830.500A30.500 30.500 0 0 1 417.200 832H390z" fill="#e8423a"/>
<circle cx="390" cy="846" r="14" fill="#f4f4f4"/>
<circle cx="390" cy="846" r="11.500" fill="#3f87d2"/>
<circle cx="390" cy="842" r="9" fill="#5a9ee0" opacity=".5"/>
</g>
<!-- Word -->
<g fill="none" stroke-linecap="round" stroke-linejoin="round">
<path d="M484.500 826L476 864" stroke="#1680bc" stroke-width="12.500"/>
<path d="M461 836L475 866" stroke="#2aa6e4" stroke-width="12.500"/>
<path d="M461 836L450 864" stroke="#167cb6" stroke-width="11"/>
<path d="M437.500 825.500L448 866" stroke="#29a3e2" stroke-width="12.500"/>
<path d="M448 866L452 858" stroke="#29a3e2" stroke-width="12.500"/>
<path d="M475 866L478 856" stroke="#2aa6e4" stroke-width="12.500"/>
</g>
<!-- Excel -->
<g fill="none" stroke-linecap="round">
<path d="M550.500 823L516 870" stroke="#3e9640" stroke-width="12.500"/>
<path d="M516 822L552 869.500" stroke="#5dbb5a" stroke-width="12.500"/>
<path d="M530 852L516 870" stroke="#52ad50" stroke-width="12.500"/>
</g>
<!-- PowerPoint -->
<g fill="none" stroke-linecap="round" stroke-linejoin="round">
<path d="M603 845C640 848 632 824 612 823" stroke="#c64a2a" stroke-width="11"/>
<path d="M592 823.500H610C628 823 630 838 622 842" stroke="#f26a34" stroke-width="14"/>
<path d="M594.500 851V869" stroke="#f26a34" stroke-width="14.500"/>
<path d="M594.500 851C595 846 598 844 604 844" stroke="#f26a34" stroke-width="14"/>
</g>
</g>
</svg>
<!-- dock icons 2 -->
<svg width="1600" height="97" style="left:0;top:803px" viewBox="0 803 1600 97">
<defs>
<linearGradient id="ai5" x1="0" x2="0" y1="0" y2="1"><stop offset="0" stop-color="#f39a2e"/><stop offset=".5" stop-color="#e27e22"/><stop offset="1" stop-color="#c2611c"/></linearGradient>
<linearGradient id="ai6" x1="0" x2="0" y1="0" y2="1"><stop offset="0" stop-color="#624818"/><stop offset=".5" stop-color="#4c3610"/><stop offset="1" stop-color="#3a290c"/></linearGradient>
<linearGradient id="ps6" x1="0" x2="0" y1="0" y2="1"><stop offset="0" stop-color="#2a3680"/><stop offset="1" stop-color="#1c2560"/></linearGradient>
<linearGradient id="id6" x1="0" x2="0" y1="0" y2="1"><stop offset="0" stop-color="#5a2446"/><stop offset="1" stop-color="#421630"/></linearGradient>
<linearGradient id="aps" x1="0" x2="0" y1="0" y2="1"><stop offset="0" stop-color="#143a8c"/><stop offset=".45" stop-color="#1a62c4"/><stop offset=".55" stop-color="#1aa0f4"/><stop offset="1" stop-color="#2ab8ff"/></linearGradient>
<linearGradient id="fbk" x1="0" x2="1" y1="0" y2="1"><stop offset="0" stop-color="#e6e9f0"/><stop offset=".6" stop-color="#c5cad4"/><stop offset="1" stop-color="#aab0bc"/></linearGradient>
<linearGradient id="crt" x1="0" x2="1" y1="0" y2="0"><stop offset="0" stop-color="#b01208"/><stop offset=".1" stop-color="#f4261a"/><stop offset=".2" stop-color="#b4140a"/><stop offset=".3" stop-color="#f62a1c"/><stop offset=".4" stop-color="#b4140a"/><stop offset=".5" stop-color="#f62a1c"/><stop offset=".6" stop-color="#b4140a"/><stop offset=".7" stop-color="#f62a1c"/><stop offset=".8" stop-color="#b4140a"/><stop offset=".9" stop-color="#f4261a"/><stop offset="1" stop-color="#a81006"/></linearGradient>
<linearGradient id="fld" x1="0" x2="0" y1="0" y2="1"><stop offset="0" stop-color="#a9cae8"/><stop offset="1" stop-color="#86aed6"/></linearGradient>
<linearGradient id="trs" x1="0" x2="1" y1="0" y2="0"><stop offset="0" stop-color="#7a7a7a"/><stop offset=".25" stop-color="#d8d8d8"/><stop offset=".5" stop-color="#8a8a8a"/><stop offset=".8" stop-color="#c4c4c4"/><stop offset="1" stop-color="#5c5c5c"/></linearGradient>
<pattern id="mesh" width="3.4" height="3.4" patternUnits="userSpaceOnUse" patternTransform="rotate(40) skewX(-10)"><rect width="3.4" height="3.4" fill="#181818"/><path d="M0 .7H3.4M.7 0V3.4" stroke="#ececec" stroke-width="1.150"/></pattern>
</defs>
<g id="dk2">
<!-- camera + monster -->
<g>
<g transform="rotate(28 655 822)"><rect x="646" y="815" width="11" height="11" rx="1.500" fill="#23262c"/><rect x="656" y="813" width="10" height="14" rx="1" fill="#15171b"/><rect x="653" y="816.500" width="5" height="8" fill="#e9e2d4"/><rect x="647.500" y="817" width="3" height="2" fill="#3f7fd0"/><rect x="647.500" y="822" width="3" height="1.500" fill="#d03a2a"/></g>
<path d="M672 819C675 819 679 821 680 823L689 823C691 820 695 817.500 698 817.500 697.500 821 695.500 824.500 693 826.500 695 831 694 837 690 840 693 842 695 844 696.500 846 699 843 701.500 840 702 835L700 832 700.500 829 702.500 831.500 703 828 704.500 831 706 829 706 833C707 840 702 848 697 852 698 858 697 864 694 868L694.500 876C696 877 697 879 696.500 880H687L687.500 869H683L683.500 880H673.500C673 878.500 674 877 675.500 876.500L675 868C672 864 671 859 671.500 854 670 858 670 862 672 866L670 869C666 864 665 857 668 851 670 846 674 843 679 841 675 838 674 831 676.500 826.500 674 824.500 672.500 822 672 819z" fill="#4aa83c"/>
<path d="M676 829C680 832 690 832 694 829 693 836 677 836 676 829z" fill="#2f7a28"/>
<ellipse cx="684.500" cy="854" rx="8" ry="9" fill="#f2d62a"/>
<circle cx="680" cy="825.500" r="1.700" fill="#fff"/><circle cx="688.500" cy="825.500" r="1.700" fill="#fff"/><circle cx="680.200" cy="825.700" r=".7" fill="#222"/><circle cx="688.300" cy="825.700" r=".7" fill="#222"/>
</g>
<!-- Ai CS5 -->
<g>
<path d="M715.500 812H776V817H781V874H720L715.500 870z" fill="#9a4e12"/>
<path d="M715.500 812H776V816.500H720z" fill="#ffd23e"/>
<path d="M715.500 812L720 816.500V874L715.500 870z" fill="#b35c14"/>
<rect x="720" y="816.500" width="61" height="57.500" fill="url(#ai5)"/>
<text transform="translate(732.500 859) scale(.8 1)" font-family="Liberation Sans" font-weight="bold" font-size="41" fill="#ffd652">Ai</text>
</g>
<!-- Ai CS6 -->
<g>
<rect x="790" y="815" width="61" height="59" fill="#fdb73e"/>
<rect x="794.500" y="819.500" width="52" height="50" fill="url(#ai6)"/>
<text transform="translate(803.500 856.500) scale(.81 1)" font-family="Liberation Sans" font-weight="bold" font-size="38" fill="#fdc062">Ai</text>
</g>
<!-- Ps -->
<g>
<rect x="860" y="815" width="62" height="59" fill="#8fc9f8"/>
<rect x="864.500" y="819.500" width="53" height="50" fill="url(#ps6)"/>
<text transform="translate(872.500 856.500) scale(.78 1)" font-family="Liberation Sans" font-weight="bold" font-size="38" fill="#8fc9f8">Ps</text>
</g>
<!-- Id -->
<g>
<rect x="932" y="815" width="61" height="59" fill="#f162b2"/>
<rect x="936.500" y="819.500" width="52" height="50" fill="url(#id6)"/>
<text transform="translate(947.500 856.500) scale(.8 1)" font-family="Liberation Sans" font-weight="bold" font-size="38" fill="#f46ab8">Id</text>
</g>
<!-- App Store -->
<g>
<circle cx="1035" cy="846" r="31" fill="#f6f6f6" stroke="#9a9a9a" stroke-width=".8"/>
<circle cx="1035" cy="846" r="28" fill="url(#aps)"/>
<rect x="1016" y="843" width="37" height="6.500" fill="#f4f4f4"/>
<path d="M1033.500 825.500l3-1.500 17.500 33.500-3.500 2z" fill="#f2f2f2"/>
<path d="M1031 831l3.500 2-14.500 25.500-3.500 1.500.5-3.500z" fill="#f2f2f2"/>
<path d="M1031 831l3.500 2 1.500-3c.5-1.500-2.500-3-3.500-1.500z" fill="#dcdcdc"/>
</g>
<!-- Font Book -->
<g>
<path d="M1075 831L1112 817.500L1133 844L1133 848L1095 872.500L1093 869z" fill="#8e949e"/>
<path d="M1075 831L1112 817.500L1133 844L1094 868z" fill="url(#fbk)"/>
<path d="M1094 868L1133 844V848L1095 872.500z" fill="#f4f4f4"/>
<path d="M1075 831L1094 868 1095 872.500 1074 834z" fill="#a7adb8"/>
<text transform="translate(1091 860) rotate(-17) skewX(-14)" font-family="Liberation Serif" font-size="42" fill="#858585">F</text>
<path d="M1112 861l6-3 6 4v6l-6 3-6-4z" fill="#e4e4e4" stroke="#aaa" stroke-width=".5"/><path d="M1112 861l6 4 6-3M1118 865v6" stroke="#9a9a9a" stroke-width=".6" fill="none"/>
<path d="M1126 853l5-2.500 6 4v6l-5 2.500-6-4z" fill="#e4e4e4" stroke="#aaa" stroke-width=".5"/><path d="M1126 853l6 4 5-2.500M1132 857v6" stroke="#9a9a9a" stroke-width=".6" fill="none"/>
</g>
<!-- Calendar -->
<g transform="rotate(-7 1177 848)">
<rect x="1150" y="826" width="57" height="52" rx="2" fill="#4e4e4e"/>
<rect x="1152" y="823" width="53" height="51" fill="#dcdcdc"/>
<rect x="1151" y="820" width="54" height="51" fill="#fbfbfb"/>
<rect x="1151" y="820" width="54" height="16.500" fill="#d14a4a"/>
<rect x="1151" y="820" width="54" height="4" fill="#e27a76"/>
<text x="1154" y="834.500" font-family="Liberation Sans" font-weight="bold" font-size="9" fill="#fff">MAR</text>
<g fill="#e59a98"><rect x="1178" y="826" width="8" height="1.500"/><rect x="1178" y="829.500" width="8" height="1.500"/><rect x="1178" y="833" width="8" height="1.500"/><rect x="1190" y="826" width="9" height="1.500"/><rect x="1190" y="829.500" width="9" height="1.500"/><rect x="1190" y="833" width="9" height="1.500"/></g>
<text x="1161.500" y="867" font-family="Liberation Sans" font-weight="bold" font-size="33" fill="#1a1a1a" textLength="33" lengthAdjust="spacingAndGlyphs">27</text>
<path d="M1160 825V812.500a1.700 1.700 0 0 1 3.400 0V825" fill="none" stroke="#9aa0a8" stroke-width="1.600"/><path d="M1188 825V812.500a1.700 1.700 0 0 1 3.400 0V825" fill="none" stroke="#9aa0a8" stroke-width="1.600"/>
</g>
<!-- Photo Booth -->
<g>
<rect x="1216.500" y="811.500" width="51" height="66.500" fill="#f2f2f2" stroke="#a9a9a9" stroke-width="1"/>
<rect x="1217.500" y="812.500" width="49" height="4" fill="#fff"/>
<rect x="1218" y="816.500" width="48" height="3" fill="#8e8e8e"/>
<path d="M1219.500 819.500H1265V857C1258 860.500 1252 857.500 1245 859.500 1238 861 1230 858 1219.500 860z" fill="url(#crt)"/>
<path d="M1219 862h46.500v14h-46.500z" fill="#e8e8e8"/>
<path d="M1219 876l5-13h36l5.500 13z" fill="#fff"/>
<path d="M1230 860l-5.500 11M1241 860l3.500 15M1236 860l-5.500 15M1238 860h-9M1227 866.500h15" stroke="#7a3c1e" stroke-width="2" fill="none"/>
<g transform="rotate(22 1265 853)">
<rect x="1256" y="828" width="19" height="49" fill="#fdfdfd" stroke="#c9c9c9" stroke-width=".5"/>
<g><rect x="1258" y="830.500" width="15" height="13" fill="#a01818"/><ellipse cx="1265.500" cy="838" rx="4.500" ry="5.500" fill="#e4b89a"/><path d="M1259 844v-8c1-7 12-7 13.500 0v8l-2.500 0v-6c-1-3-7-3-8.500 0v6z" fill="#1c1412"/></g>
<g><rect x="1258" y="845.500" width="15" height="13" fill="#2a2422"/><ellipse cx="1265.500" cy="853" rx="4.500" ry="5.500" fill="#dca888"/><path d="M1259 859v-8c1-7 12-7 13.500 0v8l-2.500 0v-6c-1-3-7-3-8.500 0v6z" fill="#120e0c"/></g>
<g><rect x="1258" y="860.500" width="15" height="13" fill="#8a1414"/><ellipse cx="1265.500" cy="868" rx="4.500" ry="5.500" fill="#e0b090"/><path d="M1259 874v-8c1-7 12-7 13.500 0v8l-2.500 0v-6c-1-3-7-3-8.500 0v6z" fill="#1a1210"/></g>
</g>
</g>
<!-- separator -->
<g fill="#f0f0f0" opacity=".75"><rect x="1298" y="848" width="11" height="2"/><rect x="1297.500" y="852" width="12" height="2.500"/><rect x="1297" y="856.500" width="13" height="2.500"/><rect x="1296.500" y="861.500" width="14" height="3"/><rect x="1296" y="867" width="15" height="3.500"/><rect x="1295" y="874" width="17" height="4"/><rect x="1294" y="882" width="19" height="5" opacity=".8"/></g>
<!-- Applications folder -->
<g>
<path d="M1325 821.500h25l4 6h35.500a2.500 2.500 0 0 1 2.500 2.500v40a2.500 2.500 0 0 1-2.500 2.500h-65a2.500 2.500 0 0 1-2.500-2.500v-46a2.500 2.500 0 0 1 2.500-2.500z" fill="#8fb6dc"/>
<rect x="1322" y="829.500" width="70" height="43" rx="2.500" fill="url(#fld)"/>
<path d="M1322.500 830.500h69" stroke="#c4dcf2" stroke-width="1"/>
<g fill="#7ba2cc"><rect x="1339" y="850.500" width="36" height="6"/><path d="M1356 834.500l3-1.500 14.500 32-3.500 1.500z"/><path d="M1354 840l3.500 1.500-13 23-3.500 2 .5-4z"/></g>
</g>
<!-- Documents stack -->
<g>
<path d="M1409 812.500h23.500l7 7v9H1409z" fill="#f4f4f4" stroke="#c4c4c4" stroke-width=".6"/>
<rect x="1425.500" y="813" width="3" height="14" fill="#3a3a3a"/>
<rect x="1400" y="823.500" width="55" height="5" fill="#ececec" stroke="#cdcdcd" stroke-width=".5"/>
<rect x="1397.500" y="826" width="60.500" height="44" fill="#fdfdfd" stroke="#c9c9c9" stroke-width=".8"/>
<rect x="1400.500" y="829" width="54.500" height="38" fill="none" stroke="#e4e4e4" stroke-width=".6"/>
<path d="M1431 840c2-5 9-7 14-5 5 3 6 10 3 15-1 4 0 8 1 12h-12c1-4 0-7-2-10-3-3-5-7-4-12z" fill="#d8a8a0"/>
<path d="M1436 856l10 1 2 9h-13z" fill="#9a8c84"/>
<path d="M1407 843c1-2 3-4 5-3l2 5c2 0 3 2 3 4l-1 8-5 1c-1-4-2-6-4-8z" fill="#e0b4ac"/>
<path d="M1411 838c2-3 6-4 8-3l-4 3 4 1c-3 2-6 2-8-1z" fill="#8a4aa8"/>
<path d="M1402 856c3-4 8-4 12-2 4-3 9-2 12 1l6 2-1 5h-29z" fill="#b8a0d0"/>
<path d="M1401 859c4-2 9-1 13 1 4 0 8-1 12 1l-2 3h-22z" fill="#e8d060"/>
<path d="M1403 861c6-1 14-1 22 1" stroke="#58a060" stroke-width="1.200" fill="none"/>
</g>
<!-- Trash -->
<g>
<ellipse cx="1500" cy="877" rx="26" ry="5" fill="#55554f" opacity=".3"/>
<path d="M1472 824L1482 870C1488 877 1511 877 1517 870L1528 824z" fill="url(#mesh)"/>
<path d="M1472 824L1482 870C1488 877 1511 877 1517 870L1528 824z" fill="url(#trs)" opacity=".28"/>
<ellipse cx="1499.500" cy="824" rx="27.500" ry="9.500" fill="#2e2e2c"/>
<ellipse cx="1499.500" cy="822" rx="25" ry="6" fill="url(#mesh)" opacity=".55"/>
<path d="M1477 828l5-8 8-5 7 3 3 4 6-5 10 1 5 6 2 6c-12 6-34 6-46-2z" fill="#f7f7f7"/>
<path d="M1483 820l7 6 7-8M1500 822l4 6 9-6M1490 826l9 3 5-1" fill="none" stroke="#bdbdbd" stroke-width=".9"/>
<ellipse cx="1499.500" cy="824" rx="27.500" ry="9.500" fill="none" stroke="url(#trs)" stroke-width="2.800"/>
<path d="M1482 868C1488 875 1511 875 1517 868L1517.500 875C1511 883 1488 883 1481.500 875z" fill="url(#trs)" stroke="#777" stroke-width=".5"/>
<path d="M1482 871C1490 877 1509 877 1517 871" fill="none" stroke="#f4f4f4" stroke-width="1.200" opacity=".8"/>
</g>
</g>
</svg>
<!-- overlays -->
<div class="abs" style="left:0;top:19px;width:1px;height:751px;background:#2e2e2e"></div>
<div class="abs" style="left:256px;top:802.5px;width:1066px;height:1.5px;background:#b2b2b2"></div>
</div></body></html>
